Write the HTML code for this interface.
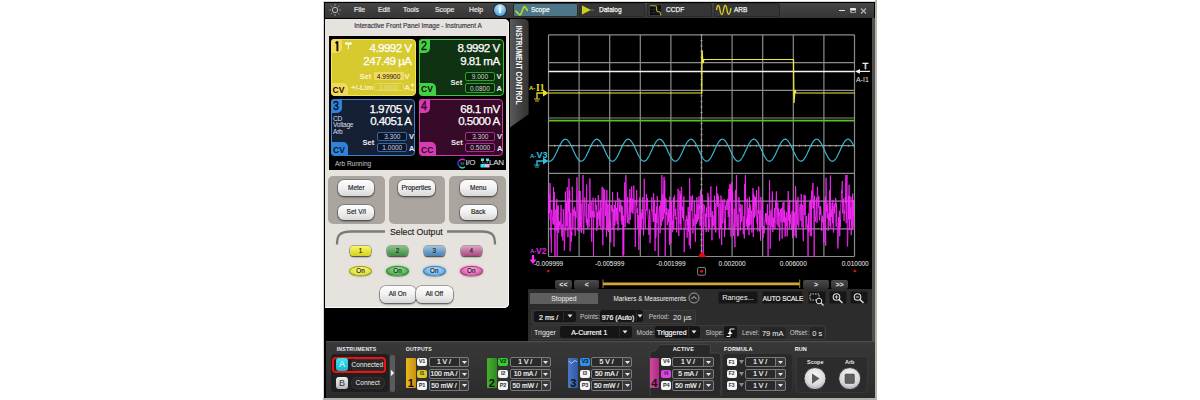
<!DOCTYPE html><html><head><meta charset="utf-8"><style>
html,body{margin:0;padding:0}
body{width:1200px;height:400px;background:#fff;position:relative;overflow:hidden;font-family:"Liberation Sans",sans-serif}
div{box-sizing:border-box}
</style></head><body>
<div style="position:absolute;left:323px;top:1px;width:554px;height:399px;background:#d8d6d0"></div>
<div style="position:absolute;left:324px;top:2px;width:551px;height:396px;background:#000"></div>
<div style="position:absolute;left:875px;top:2px;width:2px;height:398px;background:#b8b4a8"></div>
<div style="position:absolute;left:323px;top:398px;width:554px;height:2px;background:#b4b0a8"></div>
<div style="position:absolute;left:325px;top:3px;width:549px;height:14.5px;background:linear-gradient(#464646,#353535)"></div>
<svg style="position:absolute;left:328px;top:3px" width="14" height="14" viewBox="0 0 14 14"><circle cx="7" cy="7" r="2.7" fill="none" stroke="#d0d0d0" stroke-width="0.85"/><g stroke="#a8a8a8" stroke-width="0.75"><line x1="7" y1="0.8" x2="7" y2="3"/><line x1="7" y1="11" x2="7" y2="13.2"/><line x1="0.8" y1="7" x2="3" y2="7"/><line x1="11" y1="7" x2="13.2" y2="7"/><line x1="2.6" y1="2.6" x2="4.1" y2="4.1"/><line x1="9.9" y1="9.9" x2="11.4" y2="11.4"/><line x1="2.6" y1="11.4" x2="4.1" y2="9.9"/><line x1="9.9" y1="4.1" x2="11.4" y2="2.6"/></g></svg>
<div style="position:absolute;left:354px;top:6.1px;text-align:left;white-space:nowrap;line-height:1;font-size:7.6px;color:#ececec;-webkit-text-stroke:0.2px #ececec;transform:scaleX(0.9);transform-origin:0 0">File</div>
<div style="position:absolute;left:377.5px;top:6.1px;text-align:left;white-space:nowrap;line-height:1;font-size:7.6px;color:#ececec;-webkit-text-stroke:0.2px #ececec;transform:scaleX(0.9);transform-origin:0 0">Edit</div>
<div style="position:absolute;left:403px;top:6.1px;text-align:left;white-space:nowrap;line-height:1;font-size:7.6px;color:#ececec;-webkit-text-stroke:0.2px #ececec;transform:scaleX(0.9);transform-origin:0 0">Tools</div>
<div style="position:absolute;left:435px;top:6.1px;text-align:left;white-space:nowrap;line-height:1;font-size:7.6px;color:#ececec;-webkit-text-stroke:0.2px #ececec;transform:scaleX(0.9);transform-origin:0 0">Scope</div>
<div style="position:absolute;left:469px;top:6.1px;text-align:left;white-space:nowrap;line-height:1;font-size:7.6px;color:#ececec;-webkit-text-stroke:0.2px #ececec;transform:scaleX(0.9);transform-origin:0 0">Help</div>
<div style="position:absolute;left:493.5px;top:3.8px;width:12.6px;height:12.6px;border-radius:50%;background:radial-gradient(circle at 50% 30%,#d8ecf8,#70b8e8 55%,#3088c8);box-shadow:0 0 0 1px #1c2a38"></div>
<div style="position:absolute;left:499px;top:7.6px;width:1.8px;height:5.4px;background:#f8f8f8"></div>
<div style="position:absolute;left:499px;top:5.6px;width:1.8px;height:1.4px;background:#f8f8f8"></div>
<div style="position:absolute;left:513px;top:3px;width:64.5px;height:14px;background:#4d7688;border-radius:2px;border:1px solid #2a2a2a"></div>
<svg style="position:absolute;left:515px;top:4px" width="13" height="12"><path d="M1 7 L4 10.5 Q5 11.5 6 10 L8.5 3.5 Q9.5 2 10.5 3.5 L12.5 6.5" fill="none" stroke="#b8e020" stroke-width="1.6" stroke-linecap="round"/></svg>
<div style="position:absolute;left:531px;top:6.0px;text-align:left;white-space:nowrap;line-height:1;font-size:7.6px;color:#f4f4f4;-webkit-text-stroke:0.25px #f4f4f4;transform:scaleX(0.86);transform-origin:0 0">Scope</div>
<div style="position:absolute;left:579px;top:3px;width:66px;height:14px;background:#363636;border-radius:2px;border:1px solid #2a2a2a"></div>
<svg style="position:absolute;left:581px;top:5px" width="14" height="10"><path d="M1 0.5 L10 5 L1 9.5 Z" fill="#c8d020"/><line x1="10" y1="5" x2="13" y2="5" stroke="#888" stroke-width="0.8"/></svg>
<div style="position:absolute;left:599px;top:6.0px;text-align:left;white-space:nowrap;line-height:1;font-size:7.6px;color:#f4f4f4;-webkit-text-stroke:0.25px #f4f4f4;transform:scaleX(0.86);transform-origin:0 0">Datalog</div>
<div style="position:absolute;left:647px;top:3px;width:65px;height:14px;background:#363636;border-radius:2px;border:1px solid #2a2a2a"></div>
<svg style="position:absolute;left:649px;top:4px" width="14" height="12"><rect x="1" y="1.5" width="11" height="9.5" fill="#0c0c0c"/><path d="M5 1.5 V11 M8.5 1.5 V11 M1 5.5 H12 M1 8.5 H12" stroke="#333" stroke-width="0.5"/><path d="M1 1.8 L6 1.8 Q7.5 1.8 7.5 3.5 L7.5 6 Q7.5 7.5 9 7.5 Q11.5 7.5 11.5 10 L12 11.5" fill="none" stroke="#b0a838" stroke-width="1.1"/></svg>
<div style="position:absolute;left:666px;top:6.0px;text-align:left;white-space:nowrap;line-height:1;font-size:7.6px;color:#f4f4f4;-webkit-text-stroke:0.25px #f4f4f4;transform:scaleX(0.86);transform-origin:0 0">CCDF</div>
<div style="position:absolute;left:714px;top:3px;width:66px;height:14px;background:#363636;border-radius:2px;border:1px solid #2a2a2a"></div>
<svg style="position:absolute;left:716px;top:4px" width="16" height="12"><path d="M0.5 6 C1.5 0 3 0 4 6 S6.5 12 7.5 6 S10 0 11 6 S13.5 12 15 4" fill="none" stroke="#e0d020" stroke-width="1.3"/></svg>
<div style="position:absolute;left:734px;top:6.0px;text-align:left;white-space:nowrap;line-height:1;font-size:7.6px;color:#f4f4f4;-webkit-text-stroke:0.25px #f4f4f4;transform:scaleX(0.86);transform-origin:0 0">ARB</div>
<div style="position:absolute;left:838.8px;top:9.6px;width:6px;height:1.5px;background:#e0e0e0"></div>
<div style="position:absolute;left:850px;top:8px;width:6px;height:5px;background:#9a9a9a;border-top:2px solid #e8e8e8;border-radius:1px"></div>
<div style="position:absolute;left:851.5px;top:10.5px;width:3px;height:1.3px;background:#333"></div>
<svg style="position:absolute;left:860px;top:7.5px" width="7" height="6"><path d="M1 0.5 L6 5.5 M6 0.5 L1 5.5" stroke="#b8b8b8" stroke-width="1.1"/></svg>
<div style="position:absolute;left:875px;top:0px;width:2px;height:400px;background:#b8b4a8"></div>
<div style="position:absolute;left:325px;top:19.2px;width:184px;height:289.2px;background:#e6e2dd;border-radius:0 5px 5px 0;box-shadow:inset 0 -1px 0 #fafafa,inset -1px 0 0 #f4f2ee"></div>
<div style="position:absolute;left:325px;top:22.8px;width:186px;text-align:center;white-space:nowrap;line-height:1;font-size:6.5px;color:#3a3040;-webkit-text-stroke:0.15px #3a3040">Interactive Front Panel Image - Instrument A</div>
<div style="position:absolute;left:329px;top:36.4px;width:177px;height:133.2px;background:#000"></div>
<div style="position:absolute;left:330.5px;top:38.5px;width:85.80000000000001px;height:57.5px;background:#d6ca2e;border:1.2px solid #f2e650;border-radius:4px"></div>
<div style="position:absolute;left:330.5px;top:38.5px;width:11.5px;height:14px;background:#f5da5c;border-radius:3px 0 5px 0"></div>
<svg style="position:absolute;left:330.5px;top:38.5px" width="12" height="14"><path d="M4.6 4.2 L6.4 2.6 L6.4 12.2" stroke="#111" stroke-width="1.9" fill="none" stroke-linejoin="bevel"/></svg>
<div style="position:absolute;left:351.5px;top:42.3px;width:60px;text-align:right;white-space:nowrap;line-height:1;font-size:11.6px;color:#fff;letter-spacing:-0.55px;-webkit-text-stroke:0.25px #fff">4.9992 V</div>
<div style="position:absolute;left:351.5px;top:55.0px;width:60px;text-align:right;white-space:nowrap;line-height:1;font-size:11.6px;color:#fff;letter-spacing:-0.55px;-webkit-text-stroke:0.25px #fff">247.49 µA</div>
<svg style="position:absolute;left:344px;top:40px" width="9" height="10"><ellipse cx="2.6" cy="3.5" rx="1.6" ry="1.2" fill="#fff"/><ellipse cx="6.2" cy="3.5" rx="1.6" ry="1.2" fill="#fff"/><path d="M4.4 2.5 L4.4 9" stroke="#f8f8e0" stroke-width="1.1"/></svg>
<div style="position:absolute;left:359.5px;top:72.8px;text-align:left;white-space:nowrap;line-height:1;font-size:7.5px;font-weight:bold;color:#faf4c8">Set</div>
<div style="position:absolute;left:373.6px;top:72px;width:30px;height:8.4px;background:#f2d85e"></div>
<div style="position:absolute;left:373.6px;top:73.8px;width:30px;text-align:center;white-space:nowrap;line-height:1;font-size:6.5px;color:#111">4.99900</div>
<div style="position:absolute;left:404.5px;top:72.8px;text-align:left;white-space:nowrap;line-height:1;font-size:7.5px;font-weight:bold;color:#faf4c8">V</div>
<div style="position:absolute;left:351px;top:83.6px;text-align:left;white-space:nowrap;line-height:1;font-size:7.5px;font-weight:bold;color:#faf0c0">+/-Lim</div>
<div style="position:absolute;left:373.6px;top:82.8px;width:30px;height:8.7px;border:1px solid #e6d868;border-radius:1.5px"></div>
<div style="position:absolute;left:373.6px;top:84.6px;width:30px;text-align:center;white-space:nowrap;line-height:1;font-size:6.5px;color:#e8e098">3.0600</div>
<div style="position:absolute;left:404.5px;top:83.6px;text-align:left;white-space:nowrap;line-height:1;font-size:7.5px;font-weight:bold;color:#faf4c8">A</div>
<svg style="position:absolute;left:410px;top:83px" width="5" height="8"><path d="M2.5 0.5 L2.5 4 M0.5 2 L4.5 2 M0.5 7 L4.5 7" stroke="#faf4c8" stroke-width="1" fill="none"/></svg>
<div style="position:absolute;left:330.5px;top:82.8px;width:17.2px;height:13.2px;background:#f3d85a;border-radius:0 5px 0 4px"></div>
<div style="position:absolute;left:332.5px;top:85.6px;text-align:left;white-space:nowrap;line-height:1;font-size:8.5px;font-weight:bold;color:#111">CV</div>
<div style="position:absolute;left:418.8px;top:38.5px;width:84.80000000000001px;height:57.099999999999994px;background:#0f3312;border:1.2px solid #3cc83c;border-radius:4px"></div>
<div style="position:absolute;left:418.8px;top:38.5px;width:11.5px;height:14px;background:#44d044;border-radius:3px 0 5px 0"></div>
<div style="position:absolute;left:421.40000000000003px;top:40.0px;text-align:left;white-space:nowrap;line-height:1;font-size:12.5px;color:#111;-webkit-text-stroke:0.4px #111;transform:scaleX(0.85);transform-origin:0 0">2</div>
<div style="position:absolute;left:439.6px;top:42.3px;width:60px;text-align:right;white-space:nowrap;line-height:1;font-size:11.6px;color:#fff;letter-spacing:-0.55px;-webkit-text-stroke:0.25px #fff">8.9992 V</div>
<div style="position:absolute;left:439.6px;top:55.0px;width:60px;text-align:right;white-space:nowrap;line-height:1;font-size:11.6px;color:#fff;letter-spacing:-0.55px;-webkit-text-stroke:0.25px #fff">9.81 mA</div>
<div style="position:absolute;left:450.5px;top:78.5px;text-align:left;white-space:nowrap;line-height:1;font-size:7.5px;font-weight:bold;color:#e8f0e8">Set</div>
<div style="position:absolute;left:464.9px;top:71.6px;width:30px;height:9.6px;border:1.2px solid #2fa02f;background:#0a280c;border-radius:2px"></div>
<div style="position:absolute;left:464.9px;top:74px;width:30px;text-align:center;white-space:nowrap;line-height:1;font-size:6.5px;color:#c8d8c8">9.000</div>
<div style="position:absolute;left:464.9px;top:83.3px;width:30px;height:9.9px;border:1.2px solid #2fa02f;background:#0a280c;border-radius:2px"></div>
<div style="position:absolute;left:464.9px;top:85.8px;width:30px;text-align:center;white-space:nowrap;line-height:1;font-size:6.5px;color:#c8d8c8">0.0800</div>
<div style="position:absolute;left:496.5px;top:73.2px;text-align:left;white-space:nowrap;line-height:1;font-size:7.5px;font-weight:bold;color:#e8f0e8">V</div>
<div style="position:absolute;left:496.5px;top:85px;text-align:left;white-space:nowrap;line-height:1;font-size:7.5px;font-weight:bold;color:#e8f0e8">A</div>
<div style="position:absolute;left:418.8px;top:82.8px;width:17.6px;height:12.8px;background:#44d044;border-radius:0 5px 0 4px"></div>
<div style="position:absolute;left:421px;top:85.4px;text-align:left;white-space:nowrap;line-height:1;font-size:8.5px;font-weight:bold;color:#111">CV</div>
<div style="position:absolute;left:330.8px;top:98.8px;width:84.59999999999997px;height:57.000000000000014px;background:#152034;border:1.2px solid #3a82cc;border-radius:4px"></div>
<div style="position:absolute;left:330.8px;top:98.8px;width:11.5px;height:14px;background:#2e84d8;border-radius:3px 0 5px 0"></div>
<div style="position:absolute;left:333.40000000000003px;top:100.3px;text-align:left;white-space:nowrap;line-height:1;font-size:12.5px;color:#0a1020;-webkit-text-stroke:0.4px #0a1020;transform:scaleX(0.85);transform-origin:0 0">3</div>
<div style="position:absolute;left:351.5px;top:102.6px;width:60px;text-align:right;white-space:nowrap;line-height:1;font-size:11.6px;color:#fff;letter-spacing:-0.55px;-webkit-text-stroke:0.25px #fff">1.9705 V</div>
<div style="position:absolute;left:351.5px;top:115.3px;width:60px;text-align:right;white-space:nowrap;line-height:1;font-size:11.6px;color:#fff;letter-spacing:-0.55px;-webkit-text-stroke:0.25px #fff">0.4051 A</div>
<div style="position:absolute;left:333px;top:115.6px;text-align:left;white-space:nowrap;line-height:1;font-size:6.6px;color:#d8dde8;letter-spacing:-0.25px">CD</div>
<div style="position:absolute;left:333px;top:122.2px;text-align:left;white-space:nowrap;line-height:1;font-size:6.6px;color:#d8dde8;letter-spacing:-0.25px">Voltage</div>
<div style="position:absolute;left:333px;top:128.5px;text-align:left;white-space:nowrap;line-height:1;font-size:6.6px;color:#d8dde8;letter-spacing:-0.25px">Arb</div>
<div style="position:absolute;left:362.5px;top:139px;text-align:left;white-space:nowrap;line-height:1;font-size:7.5px;font-weight:bold;color:#e8eef8">Set</div>
<div style="position:absolute;left:377.3px;top:132px;width:30px;height:8.6px;border:1.2px solid #3468a8;background:#0c1628;border-radius:2px"></div>
<div style="position:absolute;left:377.3px;top:134px;width:30px;text-align:center;white-space:nowrap;line-height:1;font-size:6.5px;color:#c8d0e0">3.300</div>
<div style="position:absolute;left:377.3px;top:143px;width:30px;height:9px;border:1.2px solid #3468a8;background:#0c1628;border-radius:2px"></div>
<div style="position:absolute;left:377.3px;top:145.2px;width:30px;text-align:center;white-space:nowrap;line-height:1;font-size:6.5px;color:#c8d0e0">1.0000</div>
<div style="position:absolute;left:409px;top:132.8px;text-align:left;white-space:nowrap;line-height:1;font-size:7.5px;font-weight:bold;color:#e8eef8">V</div>
<div style="position:absolute;left:409px;top:144.5px;text-align:left;white-space:nowrap;line-height:1;font-size:7.5px;font-weight:bold;color:#e8eef8">A</div>
<div style="position:absolute;left:330.8px;top:142.4px;width:17.6px;height:13.4px;background:#2e84d8;border-radius:0 5px 0 4px"></div>
<div style="position:absolute;left:333px;top:145.8px;text-align:left;white-space:nowrap;line-height:1;font-size:8.5px;font-weight:bold;color:#0a1830">CV</div>
<div style="position:absolute;left:418.8px;top:98.8px;width:84.59999999999997px;height:57.000000000000014px;background:#360a28;border:1.2px solid #d03cb0;border-radius:4px"></div>
<div style="position:absolute;left:418.8px;top:98.8px;width:11.5px;height:14px;background:#d83cb4;border-radius:3px 0 5px 0"></div>
<div style="position:absolute;left:421.40000000000003px;top:100.3px;text-align:left;white-space:nowrap;line-height:1;font-size:12.5px;color:#2a0a26;-webkit-text-stroke:0.4px #2a0a26;transform:scaleX(0.85);transform-origin:0 0">4</div>
<div style="position:absolute;left:439.6px;top:102.6px;width:60px;text-align:right;white-space:nowrap;line-height:1;font-size:11.6px;color:#fff;letter-spacing:-0.55px;-webkit-text-stroke:0.25px #fff">68.1 mV</div>
<div style="position:absolute;left:439.6px;top:115.3px;width:60px;text-align:right;white-space:nowrap;line-height:1;font-size:11.6px;color:#fff;letter-spacing:-0.55px;-webkit-text-stroke:0.25px #fff">0.5000 A</div>
<div style="position:absolute;left:451px;top:139px;text-align:left;white-space:nowrap;line-height:1;font-size:7.5px;font-weight:bold;color:#f0e8f0">Set</div>
<div style="position:absolute;left:465.3px;top:132px;width:30px;height:8.6px;border:1.2px solid #a82c8c;background:#2a0820;border-radius:2px"></div>
<div style="position:absolute;left:465.3px;top:134px;width:30px;text-align:center;white-space:nowrap;line-height:1;font-size:6.5px;color:#d8c8d8">3.300</div>
<div style="position:absolute;left:465.3px;top:143px;width:30px;height:9px;border:1.2px solid #a82c8c;background:#2a0820;border-radius:2px"></div>
<div style="position:absolute;left:465.3px;top:145.2px;width:30px;text-align:center;white-space:nowrap;line-height:1;font-size:6.5px;color:#d8c8d8">0.5000</div>
<div style="position:absolute;left:497px;top:132.8px;text-align:left;white-space:nowrap;line-height:1;font-size:7.5px;font-weight:bold;color:#f0e8f0">V</div>
<div style="position:absolute;left:497px;top:144.5px;text-align:left;white-space:nowrap;line-height:1;font-size:7.5px;font-weight:bold;color:#f0e8f0">A</div>
<div style="position:absolute;left:418.8px;top:142.4px;width:17.6px;height:13.4px;background:#d83cb4;border-radius:0 5px 0 4px"></div>
<div style="position:absolute;left:421px;top:145.8px;text-align:left;white-space:nowrap;line-height:1;font-size:8.5px;font-weight:bold;color:#2a0a26">CC</div>
<div style="position:absolute;left:335px;top:160.8px;text-align:left;white-space:nowrap;line-height:1;font-size:6.5px;color:#c8c8c8">Arb Running</div>
<svg style="position:absolute;left:457px;top:158px" width="10" height="11"><path d="M8 2.2 A4 4 0 0 0 2 3" stroke="#e020e0" stroke-width="1.4" fill="none"/><path d="M2 3 A4 4 0 0 0 2.5 8.5" stroke="#2040ff" stroke-width="1.4" fill="none"/><path d="M2.5 8.5 A4 4 0 0 0 8 8.8" stroke="#20e0b0" stroke-width="1.4" fill="none"/><text x="3.2" y="7.3" font-size="3.6" font-family="Liberation Sans" fill="#90a080">88</text></svg>
<div style="position:absolute;left:465.5px;top:159.3px;text-align:left;white-space:nowrap;line-height:1;font-size:8px;color:#e8e8e8;letter-spacing:-0.4px">I/O</div>
<svg style="position:absolute;left:480px;top:158px" width="10" height="10"><rect x="1" y="0.5" width="3" height="2.5" fill="#40e8f0"/><rect x="6" y="0.5" width="3" height="2.5" fill="#40e8f0"/><path d="M2.5 3 L2.5 5 L7.5 5 L7.5 3" stroke="#9090a0" stroke-width="0.6" fill="none"/><rect x="0.5" y="6" width="4.5" height="3.5" fill="#40e0f0"/><rect x="5" y="6" width="4.5" height="3.5" fill="#d8b8e0"/></svg>
<div style="position:absolute;left:489px;top:159.3px;text-align:left;white-space:nowrap;line-height:1;font-size:8px;color:#e8e8e8;letter-spacing:-0.3px">LAN</div>
<div style="position:absolute;left:327.9px;top:175.8px;width:56.900000000000034px;height:48.2px;background:#aaa69f;border-radius:5px"></div>
<div style="position:absolute;left:389.2px;top:175.8px;width:55.80000000000001px;height:48.2px;background:#aaa69f;border-radius:5px"></div>
<div style="position:absolute;left:448.5px;top:175.8px;width:57.69999999999999px;height:48.2px;background:#aaa69f;border-radius:5px"></div>
<div style="position:absolute;left:338.4px;top:180px;width:35.900000000000034px;height:16px;background:linear-gradient(#fdfdfd,#f0f0f0 50%,#d8d8d8);border-radius:6px;box-shadow:0 0 0 0.8px rgba(70,70,70,.55),0 1.2px 1.8px rgba(0,0,0,.55)"></div>
<div style="position:absolute;left:338.4px;top:184.75px;width:35.900000000000034px;text-align:center;white-space:nowrap;line-height:1;font-size:6.5px;color:#1a1a1a;-webkit-text-stroke:0.15px #1a1a1a">Meter</div>
<div style="position:absolute;left:338.4px;top:204.7px;width:35.900000000000034px;height:15.700000000000017px;background:linear-gradient(#fdfdfd,#f0f0f0 50%,#d8d8d8);border-radius:6px;box-shadow:0 0 0 0.8px rgba(70,70,70,.55),0 1.2px 1.8px rgba(0,0,0,.55)"></div>
<div style="position:absolute;left:338.4px;top:209.3px;width:35.900000000000034px;text-align:center;white-space:nowrap;line-height:1;font-size:6.5px;color:#1a1a1a;-webkit-text-stroke:0.15px #1a1a1a">Set V/I</div>
<div style="position:absolute;left:398px;top:180px;width:36.5px;height:16px;background:linear-gradient(#fdfdfd,#f0f0f0 50%,#d8d8d8);border-radius:6px;box-shadow:0 0 0 0.8px rgba(70,70,70,.55),0 1.2px 1.8px rgba(0,0,0,.55)"></div>
<div style="position:absolute;left:398px;top:184.75px;width:36.5px;text-align:center;white-space:nowrap;line-height:1;font-size:6.5px;color:#1a1a1a;-webkit-text-stroke:0.15px #1a1a1a">Properties</div>
<div style="position:absolute;left:459.9px;top:180px;width:36.700000000000045px;height:16px;background:linear-gradient(#fdfdfd,#f0f0f0 50%,#d8d8d8);border-radius:6px;box-shadow:0 0 0 0.8px rgba(70,70,70,.55),0 1.2px 1.8px rgba(0,0,0,.55)"></div>
<div style="position:absolute;left:459.9px;top:184.75px;width:36.700000000000045px;text-align:center;white-space:nowrap;line-height:1;font-size:6.5px;color:#1a1a1a;-webkit-text-stroke:0.15px #1a1a1a">Menu</div>
<div style="position:absolute;left:459.9px;top:204.7px;width:36.700000000000045px;height:15.700000000000017px;background:linear-gradient(#fdfdfd,#f0f0f0 50%,#d8d8d8);border-radius:6px;box-shadow:0 0 0 0.8px rgba(70,70,70,.55),0 1.2px 1.8px rgba(0,0,0,.55)"></div>
<div style="position:absolute;left:459.9px;top:209.3px;width:36.700000000000045px;text-align:center;white-space:nowrap;line-height:1;font-size:6.5px;color:#1a1a1a;-webkit-text-stroke:0.15px #1a1a1a">Back</div>
<svg style="position:absolute;left:330px;top:225px" width="175" height="25"><path d="M7 19.5 C7 11 9 6.5 21 6.5 L55 6.5" fill="none" stroke="#7e7a74" stroke-width="2.3"/><path d="M117 6.5 L152 6.5 C163 6.5 165 11 165 19.5" fill="none" stroke="#7e7a74" stroke-width="2.3"/></svg>
<div style="position:absolute;left:390px;top:227.8px;text-align:left;white-space:nowrap;line-height:1;font-size:8.7px;color:#1e1e1e;-webkit-text-stroke:0.15px #1e1e1e">Select Output</div>
<div style="position:absolute;left:350px;top:246px;width:21px;height:9.75px;background:linear-gradient(#f8f860,#d8d020);border-radius:3.5px;box-shadow:0 0 0 0.7px rgba(40,40,40,.45),0 1.2px 1.2px rgba(0,0,0,.55)"></div>
<div style="position:absolute;left:350px;top:247.7px;width:21px;text-align:center;white-space:nowrap;line-height:1;font-size:6.3px;color:#222;-webkit-text-stroke:0.15px #222">1</div>
<div style="position:absolute;left:387px;top:246px;width:21px;height:9.75px;background:linear-gradient(#88c488,#3e8a44);border-radius:3.5px;box-shadow:0 0 0 0.7px rgba(40,40,40,.45),0 1.2px 1.2px rgba(0,0,0,.55)"></div>
<div style="position:absolute;left:387px;top:247.7px;width:21px;text-align:center;white-space:nowrap;line-height:1;font-size:6.3px;color:#222;-webkit-text-stroke:0.15px #222">2</div>
<div style="position:absolute;left:423.75px;top:246px;width:21px;height:9.75px;background:linear-gradient(#9cc4e4,#4a80b0);border-radius:3.5px;box-shadow:0 0 0 0.7px rgba(40,40,40,.45),0 1.2px 1.2px rgba(0,0,0,.55)"></div>
<div style="position:absolute;left:423.75px;top:247.7px;width:21px;text-align:center;white-space:nowrap;line-height:1;font-size:6.3px;color:#222;-webkit-text-stroke:0.15px #222">3</div>
<div style="position:absolute;left:460.75px;top:246px;width:21px;height:9.75px;background:linear-gradient(#e0a0c4,#a8487e);border-radius:3.5px;box-shadow:0 0 0 0.7px rgba(40,40,40,.45),0 1.2px 1.2px rgba(0,0,0,.55)"></div>
<div style="position:absolute;left:460.75px;top:247.7px;width:21px;text-align:center;white-space:nowrap;line-height:1;font-size:6.3px;color:#222;-webkit-text-stroke:0.15px #222">4</div>
<div style="position:absolute;left:349px;top:265.8px;width:23px;height:10.4px;background:radial-gradient(ellipse at 50% 30%,#fcfc90,#e0e030 75%);border-radius:50%;box-shadow:0 0 2px 0.5px rgba(240,240,60,.6),0 0.6px 0.8px rgba(0,0,0,.6);border:0.8px solid rgba(0,0,0,.3)"></div>
<div style="position:absolute;left:349px;top:267.9px;width:23px;text-align:center;white-space:nowrap;line-height:1;font-size:6.3px;color:#111;-webkit-text-stroke:0.15px #111">On</div>
<div style="position:absolute;left:386px;top:265.8px;width:23px;height:10.4px;background:radial-gradient(ellipse at 50% 30%,#a0e8a0,#48b048 75%);border-radius:50%;box-shadow:0 0 2px 0.5px rgba(60,200,60,.6),0 0.6px 0.8px rgba(0,0,0,.6);border:0.8px solid rgba(0,0,0,.3)"></div>
<div style="position:absolute;left:386px;top:267.9px;width:23px;text-align:center;white-space:nowrap;line-height:1;font-size:6.3px;color:#111;-webkit-text-stroke:0.15px #111">On</div>
<div style="position:absolute;left:422.75px;top:265.8px;width:23px;height:10.4px;background:radial-gradient(ellipse at 50% 30%,#c0e4ff,#60acec 75%);border-radius:50%;box-shadow:0 0 2px 0.5px rgba(80,170,240,.6),0 0.6px 0.8px rgba(0,0,0,.6);border:0.8px solid rgba(0,0,0,.3)"></div>
<div style="position:absolute;left:422.75px;top:267.9px;width:23px;text-align:center;white-space:nowrap;line-height:1;font-size:6.3px;color:#111;-webkit-text-stroke:0.15px #111">On</div>
<div style="position:absolute;left:459.75px;top:265.8px;width:23px;height:10.4px;background:radial-gradient(ellipse at 50% 30%,#ffb0e0,#e058b0 75%);border-radius:50%;box-shadow:0 0 2px 0.5px rgba(240,80,170,.6),0 0.6px 0.8px rgba(0,0,0,.6);border:0.8px solid rgba(0,0,0,.3)"></div>
<div style="position:absolute;left:459.75px;top:267.9px;width:23px;text-align:center;white-space:nowrap;line-height:1;font-size:6.3px;color:#111;-webkit-text-stroke:0.15px #111">On</div>
<div style="position:absolute;left:379.5px;top:286px;width:36.0px;height:16.5px;background:linear-gradient(#fdfdfd,#f0f0f0 50%,#d8d8d8);border-radius:6px;box-shadow:0 0 0 0.8px rgba(70,70,70,.55),0 1.2px 1.8px rgba(0,0,0,.55)"></div>
<div style="position:absolute;left:379.5px;top:291.0px;width:36.0px;text-align:center;white-space:nowrap;line-height:1;font-size:6.5px;color:#1a1a1a;-webkit-text-stroke:0.15px #1a1a1a">All On</div>
<div style="position:absolute;left:416px;top:286px;width:36.5px;height:16.5px;background:linear-gradient(#fdfdfd,#f0f0f0 50%,#d8d8d8);border-radius:6px;box-shadow:0 0 0 0.8px rgba(70,70,70,.55),0 1.2px 1.8px rgba(0,0,0,.55)"></div>
<div style="position:absolute;left:416px;top:291.0px;width:36.5px;text-align:center;white-space:nowrap;line-height:1;font-size:6.5px;color:#1a1a1a;-webkit-text-stroke:0.15px #1a1a1a">All Off</div>
<div style="position:absolute;left:509.5px;top:18.8px;width:19.1px;height:109px;background:linear-gradient(90deg,#5a5a5a,#3c3c3c 70%,#343434);border-radius:0 5px 0 0;clip-path:polygon(0 0,100% 0,100% 87.5%,0 100%)"></div>
<div style="position:absolute;left:514px;top:24px;width:8px;height:100px;"><div style="position:absolute;left:0;top:0;transform-origin:0 0;transform:translate(9px,1.5px) rotate(90deg) scaleX(0.82);white-space:nowrap;font-size:8.2px;font-weight:bold;color:#f8f8f8;line-height:9px">INSTRUMENT CONTROL</div></div>
<svg style="position:absolute;left:0;top:0" width="1200" height="400"><line x1="548.50" y1="34.9" x2="548.50" y2="256.5" stroke="#8c8c8c" stroke-width="1.2"/><line x1="579.10" y1="34.9" x2="579.10" y2="256.5" stroke="#8c8c8c" stroke-width="1.2"/><line x1="609.70" y1="34.9" x2="609.70" y2="256.5" stroke="#8c8c8c" stroke-width="1.2"/><line x1="640.30" y1="34.9" x2="640.30" y2="256.5" stroke="#8c8c8c" stroke-width="1.2"/><line x1="670.90" y1="34.9" x2="670.90" y2="256.5" stroke="#8c8c8c" stroke-width="1.2"/><line x1="701.50" y1="34.9" x2="701.50" y2="256.5" stroke="#8c8c8c" stroke-width="1.2"/><line x1="732.10" y1="34.9" x2="732.10" y2="256.5" stroke="#8c8c8c" stroke-width="1.2"/><line x1="762.70" y1="34.9" x2="762.70" y2="256.5" stroke="#8c8c8c" stroke-width="1.2"/><line x1="793.30" y1="34.9" x2="793.30" y2="256.5" stroke="#8c8c8c" stroke-width="1.2"/><line x1="823.90" y1="34.9" x2="823.90" y2="256.5" stroke="#8c8c8c" stroke-width="1.2"/><line x1="854.50" y1="34.9" x2="854.50" y2="256.5" stroke="#8c8c8c" stroke-width="1.2"/><line x1="548.5" y1="34.90" x2="854.5" y2="34.90" stroke="#8c8c8c" stroke-width="1.2"/><line x1="548.5" y1="62.60" x2="854.5" y2="62.60" stroke="#8c8c8c" stroke-width="1.2"/><line x1="548.5" y1="90.30" x2="854.5" y2="90.30" stroke="#8c8c8c" stroke-width="1.2"/><line x1="548.5" y1="118.00" x2="854.5" y2="118.00" stroke="#8c8c8c" stroke-width="1.2"/><line x1="548.5" y1="145.70" x2="854.5" y2="145.70" stroke="#8c8c8c" stroke-width="1.2"/><line x1="548.5" y1="173.40" x2="854.5" y2="173.40" stroke="#8c8c8c" stroke-width="1.2"/><line x1="548.5" y1="201.10" x2="854.5" y2="201.10" stroke="#8c8c8c" stroke-width="1.2"/><line x1="548.5" y1="228.80" x2="854.5" y2="228.80" stroke="#8c8c8c" stroke-width="1.2"/><line x1="548.5" y1="256.50" x2="854.5" y2="256.50" stroke="#8c8c8c" stroke-width="1.2"/><path d="M548.50 144.80h0.01v1.8 M554.62 144.80h0.01v1.8 M560.74 144.80h0.01v1.8 M566.86 144.80h0.01v1.8 M572.98 144.80h0.01v1.8 M579.10 144.80h0.01v1.8 M585.22 144.80h0.01v1.8 M591.34 144.80h0.01v1.8 M597.46 144.80h0.01v1.8 M603.58 144.80h0.01v1.8 M609.70 144.80h0.01v1.8 M615.82 144.80h0.01v1.8 M621.94 144.80h0.01v1.8 M628.06 144.80h0.01v1.8 M634.18 144.80h0.01v1.8 M640.30 144.80h0.01v1.8 M646.42 144.80h0.01v1.8 M652.54 144.80h0.01v1.8 M658.66 144.80h0.01v1.8 M664.78 144.80h0.01v1.8 M670.90 144.80h0.01v1.8 M677.02 144.80h0.01v1.8 M683.14 144.80h0.01v1.8 M689.26 144.80h0.01v1.8 M695.38 144.80h0.01v1.8 M701.50 144.80h0.01v1.8 M707.62 144.80h0.01v1.8 M713.74 144.80h0.01v1.8 M719.86 144.80h0.01v1.8 M725.98 144.80h0.01v1.8 M732.10 144.80h0.01v1.8 M738.22 144.80h0.01v1.8 M744.34 144.80h0.01v1.8 M750.46 144.80h0.01v1.8 M756.58 144.80h0.01v1.8 M762.70 144.80h0.01v1.8 M768.82 144.80h0.01v1.8 M774.94 144.80h0.01v1.8 M781.06 144.80h0.01v1.8 M787.18 144.80h0.01v1.8 M793.30 144.80h0.01v1.8 M799.42 144.80h0.01v1.8 M805.54 144.80h0.01v1.8 M811.66 144.80h0.01v1.8 M817.78 144.80h0.01v1.8 M823.90 144.80h0.01v1.8 M830.02 144.80h0.01v1.8 M836.14 144.80h0.01v1.8 M842.26 144.80h0.01v1.8 M848.38 144.80h0.01v1.8 M700.60 34.90h1.8 M700.60 40.44h1.8 M700.60 45.98h1.8 M700.60 51.52h1.8 M700.60 57.06h1.8 M700.60 62.60h1.8 M700.60 68.14h1.8 M700.60 73.68h1.8 M700.60 79.22h1.8 M700.60 84.76h1.8 M700.60 90.30h1.8 M700.60 95.84h1.8 M700.60 101.38h1.8 M700.60 106.92h1.8 M700.60 112.46h1.8 M700.60 118.00h1.8 M700.60 123.54h1.8 M700.60 129.08h1.8 M700.60 134.62h1.8 M700.60 140.16h1.8 M700.60 145.70h1.8 M700.60 151.24h1.8 M700.60 156.78h1.8 M700.60 162.32h1.8 M700.60 167.86h1.8 M700.60 173.40h1.8 M700.60 178.94h1.8 M700.60 184.48h1.8 M700.60 190.02h1.8 M700.60 195.56h1.8 M700.60 201.10h1.8 M700.60 206.64h1.8 M700.60 212.18h1.8 M700.60 217.72h1.8 M700.60 223.26h1.8 M700.60 228.80h1.8 M700.60 234.34h1.8 M700.60 239.88h1.8 M700.60 245.42h1.8 M700.60 250.96h1.8" stroke="#b0b0b0" stroke-width="1" fill="none"/><line x1="548.5" y1="71.4" x2="854.5" y2="71.4" stroke="#f2f2f2" stroke-width="1.5"/><line x1="548.5" y1="120.6" x2="854.5" y2="120.6" stroke="#58c020" stroke-width="1.6"/><path d="M548.5 93 L701.8 93 L702 50 L703 63 L704 59.5 L793.5 59.5 L794 103 L795 90 L796 93 L854.5 93" stroke="#f2ee34" stroke-width="1.2" fill="none"/><path d="M548.50 160.88 L549.00 161.09 L549.50 161.19 L550.00 161.18 L550.50 161.06 L551.00 160.83 L551.50 160.49 L552.00 160.06 L552.50 159.52 L553.00 158.89 L553.50 158.17 L554.00 157.37 L554.50 156.50 L555.00 155.57 L555.50 154.59 L556.00 153.56 L556.50 152.49 L557.00 151.41 L557.50 150.31 L558.00 149.21 L558.50 148.12 L559.00 147.05 L559.50 146.02 L560.00 145.02 L560.50 144.08 L561.00 143.20 L561.50 142.38 L562.00 141.65 L562.50 141.00 L563.00 140.44 L563.50 139.99 L564.00 139.63 L564.50 139.38 L565.00 139.24 L565.50 139.20 L566.00 139.28 L566.50 139.47 L567.00 139.76 L567.50 140.16 L568.00 140.66 L568.50 141.25 L569.00 141.93 L569.50 142.70 L570.00 143.54 L570.50 144.45 L571.00 145.41 L571.50 146.43 L572.00 147.48 L572.50 148.56 L573.00 149.65 L573.50 150.75 L574.00 151.84 L574.50 152.92 L575.00 153.97 L575.50 154.99 L576.00 155.95 L576.50 156.86 L577.00 157.70 L577.50 158.47 L578.00 159.15 L578.50 159.74 L579.00 160.24 L579.50 160.64 L580.00 160.93 L580.50 161.12 L581.00 161.20 L581.50 161.16 L582.00 161.02 L582.50 160.77 L583.00 160.41 L583.50 159.96 L584.00 159.40 L584.50 158.75 L585.00 158.02 L585.50 157.20 L586.00 156.32 L586.50 155.38 L587.00 154.38 L587.50 153.35 L588.00 152.28 L588.50 151.19 L589.00 150.09 L589.50 148.99 L590.00 147.91 L590.50 146.84 L591.00 145.81 L591.50 144.83 L592.00 143.90 L592.50 143.03 L593.00 142.23 L593.50 141.51 L594.00 140.88 L594.50 140.34 L595.00 139.91 L595.50 139.57 L596.00 139.34 L596.50 139.22 L597.00 139.21 L597.50 139.31 L598.00 139.52 L598.50 139.83 L599.00 140.25 L599.50 140.77 L600.00 141.38 L600.50 142.08 L601.00 142.86 L601.50 143.72 L602.00 144.64 L602.50 145.61 L603.00 146.63 L603.50 147.69 L604.00 148.77 L604.50 149.87 L605.00 150.97 L605.50 152.06 L606.00 153.14 L606.50 154.18 L607.00 155.18 L607.50 156.14 L608.00 157.03 L608.50 157.86 L609.00 158.61 L609.50 159.28 L610.00 159.85 L610.50 160.33 L611.00 160.71 L611.50 160.98 L612.00 161.14 L612.50 161.20 L613.00 161.14 L613.50 160.98 L614.00 160.71 L614.50 160.33 L615.00 159.85 L615.50 159.28 L616.00 158.61 L616.50 157.86 L617.00 157.03 L617.50 156.14 L618.00 155.18 L618.50 154.18 L619.00 153.14 L619.50 152.06 L620.00 150.97 L620.50 149.87 L621.00 148.77 L621.50 147.69 L622.00 146.63 L622.50 145.61 L623.00 144.64 L623.50 143.72 L624.00 142.86 L624.50 142.08 L625.00 141.38 L625.50 140.77 L626.00 140.25 L626.50 139.83 L627.00 139.52 L627.50 139.31 L628.00 139.21 L628.50 139.22 L629.00 139.34 L629.50 139.57 L630.00 139.91 L630.50 140.34 L631.00 140.88 L631.50 141.51 L632.00 142.23 L632.50 143.03 L633.00 143.90 L633.50 144.83 L634.00 145.81 L634.50 146.84 L635.00 147.91 L635.50 148.99 L636.00 150.09 L636.50 151.19 L637.00 152.28 L637.50 153.35 L638.00 154.38 L638.50 155.38 L639.00 156.32 L639.50 157.20 L640.00 158.02 L640.50 158.75 L641.00 159.40 L641.50 159.96 L642.00 160.41 L642.50 160.77 L643.00 161.02 L643.50 161.16 L644.00 161.20 L644.50 161.12 L645.00 160.93 L645.50 160.64 L646.00 160.24 L646.50 159.74 L647.00 159.15 L647.50 158.47 L648.00 157.70 L648.50 156.86 L649.00 155.95 L649.50 154.99 L650.00 153.97 L650.50 152.92 L651.00 151.84 L651.50 150.75 L652.00 149.65 L652.50 148.56 L653.00 147.48 L653.50 146.43 L654.00 145.41 L654.50 144.45 L655.00 143.54 L655.50 142.70 L656.00 141.93 L656.50 141.25 L657.00 140.66 L657.50 140.16 L658.00 139.76 L658.50 139.47 L659.00 139.28 L659.50 139.20 L660.00 139.24 L660.50 139.38 L661.00 139.63 L661.50 139.99 L662.00 140.44 L662.50 141.00 L663.00 141.65 L663.50 142.38 L664.00 143.20 L664.50 144.08 L665.00 145.02 L665.50 146.02 L666.00 147.05 L666.50 148.12 L667.00 149.21 L667.50 150.31 L668.00 151.41 L668.50 152.49 L669.00 153.56 L669.50 154.59 L670.00 155.57 L670.50 156.50 L671.00 157.37 L671.50 158.17 L672.00 158.89 L672.50 159.52 L673.00 160.06 L673.50 160.49 L674.00 160.83 L674.50 161.06 L675.00 161.18 L675.50 161.19 L676.00 161.09 L676.50 160.88 L677.00 160.57 L677.50 160.15 L678.00 159.63 L678.50 159.02 L679.00 158.32 L679.50 157.54 L680.00 156.68 L680.50 155.76 L681.00 154.79 L681.50 153.77 L682.00 152.71 L682.50 151.63 L683.00 150.53 L683.50 149.43 L684.00 148.34 L684.50 147.26 L685.00 146.22 L685.50 145.22 L686.00 144.26 L686.50 143.37 L687.00 142.54 L687.50 141.79 L688.00 141.12 L688.50 140.55 L689.00 140.07 L689.50 139.69 L690.00 139.42 L690.50 139.26 L691.00 139.20 L691.50 139.26 L692.00 139.42 L692.50 139.69 L693.00 140.07 L693.50 140.55 L694.00 141.12 L694.50 141.79 L695.00 142.54 L695.50 143.37 L696.00 144.26 L696.50 145.22 L697.00 146.22 L697.50 147.26 L698.00 148.34 L698.50 149.43 L699.00 150.53 L699.50 151.63 L700.00 152.71 L700.50 153.77 L701.00 154.79 L701.50 155.76 L702.00 156.68 L702.50 157.54 L703.00 158.32 L703.50 159.02 L704.00 159.63 L704.50 160.15 L705.00 160.57 L705.50 160.88 L706.00 161.09 L706.50 161.19 L707.00 161.18 L707.50 161.06 L708.00 160.83 L708.50 160.49 L709.00 160.06 L709.50 159.52 L710.00 158.89 L710.50 158.17 L711.00 157.37 L711.50 156.50 L712.00 155.57 L712.50 154.59 L713.00 153.56 L713.50 152.49 L714.00 151.41 L714.50 150.31 L715.00 149.21 L715.50 148.12 L716.00 147.05 L716.50 146.02 L717.00 145.02 L717.50 144.08 L718.00 143.20 L718.50 142.38 L719.00 141.65 L719.50 141.00 L720.00 140.44 L720.50 139.99 L721.00 139.63 L721.50 139.38 L722.00 139.24 L722.50 139.20 L723.00 139.28 L723.50 139.47 L724.00 139.76 L724.50 140.16 L725.00 140.66 L725.50 141.25 L726.00 141.93 L726.50 142.70 L727.00 143.54 L727.50 144.45 L728.00 145.41 L728.50 146.43 L729.00 147.48 L729.50 148.56 L730.00 149.65 L730.50 150.75 L731.00 151.84 L731.50 152.92 L732.00 153.97 L732.50 154.99 L733.00 155.95 L733.50 156.86 L734.00 157.70 L734.50 158.47 L735.00 159.15 L735.50 159.74 L736.00 160.24 L736.50 160.64 L737.00 160.93 L737.50 161.12 L738.00 161.20 L738.50 161.16 L739.00 161.02 L739.50 160.77 L740.00 160.41 L740.50 159.96 L741.00 159.40 L741.50 158.75 L742.00 158.02 L742.50 157.20 L743.00 156.32 L743.50 155.38 L744.00 154.38 L744.50 153.35 L745.00 152.28 L745.50 151.19 L746.00 150.09 L746.50 148.99 L747.00 147.91 L747.50 146.84 L748.00 145.81 L748.50 144.83 L749.00 143.90 L749.50 143.03 L750.00 142.23 L750.50 141.51 L751.00 140.88 L751.50 140.34 L752.00 139.91 L752.50 139.57 L753.00 139.34 L753.50 139.22 L754.00 139.21 L754.50 139.31 L755.00 139.52 L755.50 139.83 L756.00 140.25 L756.50 140.77 L757.00 141.38 L757.50 142.08 L758.00 142.86 L758.50 143.72 L759.00 144.64 L759.50 145.61 L760.00 146.63 L760.50 147.69 L761.00 148.77 L761.50 149.87 L762.00 150.97 L762.50 152.06 L763.00 153.14 L763.50 154.18 L764.00 155.18 L764.50 156.14 L765.00 157.03 L765.50 157.86 L766.00 158.61 L766.50 159.28 L767.00 159.85 L767.50 160.33 L768.00 160.71 L768.50 160.98 L769.00 161.14 L769.50 161.20 L770.00 161.14 L770.50 160.98 L771.00 160.71 L771.50 160.33 L772.00 159.85 L772.50 159.28 L773.00 158.61 L773.50 157.86 L774.00 157.03 L774.50 156.14 L775.00 155.18 L775.50 154.18 L776.00 153.14 L776.50 152.06 L777.00 150.97 L777.50 149.87 L778.00 148.77 L778.50 147.69 L779.00 146.63 L779.50 145.61 L780.00 144.64 L780.50 143.72 L781.00 142.86 L781.50 142.08 L782.00 141.38 L782.50 140.77 L783.00 140.25 L783.50 139.83 L784.00 139.52 L784.50 139.31 L785.00 139.21 L785.50 139.22 L786.00 139.34 L786.50 139.57 L787.00 139.91 L787.50 140.34 L788.00 140.88 L788.50 141.51 L789.00 142.23 L789.50 143.03 L790.00 143.90 L790.50 144.83 L791.00 145.81 L791.50 146.84 L792.00 147.91 L792.50 148.99 L793.00 150.09 L793.50 151.19 L794.00 152.28 L794.50 153.35 L795.00 154.38 L795.50 155.38 L796.00 156.32 L796.50 157.20 L797.00 158.02 L797.50 158.75 L798.00 159.40 L798.50 159.96 L799.00 160.41 L799.50 160.77 L800.00 161.02 L800.50 161.16 L801.00 161.20 L801.50 161.12 L802.00 160.93 L802.50 160.64 L803.00 160.24 L803.50 159.74 L804.00 159.15 L804.50 158.47 L805.00 157.70 L805.50 156.86 L806.00 155.95 L806.50 154.99 L807.00 153.97 L807.50 152.92 L808.00 151.84 L808.50 150.75 L809.00 149.65 L809.50 148.56 L810.00 147.48 L810.50 146.43 L811.00 145.41 L811.50 144.45 L812.00 143.54 L812.50 142.70 L813.00 141.93 L813.50 141.25 L814.00 140.66 L814.50 140.16 L815.00 139.76 L815.50 139.47 L816.00 139.28 L816.50 139.20 L817.00 139.24 L817.50 139.38 L818.00 139.63 L818.50 139.99 L819.00 140.44 L819.50 141.00 L820.00 141.65 L820.50 142.38 L821.00 143.20 L821.50 144.08 L822.00 145.02 L822.50 146.02 L823.00 147.05 L823.50 148.12 L824.00 149.21 L824.50 150.31 L825.00 151.41 L825.50 152.49 L826.00 153.56 L826.50 154.59 L827.00 155.57 L827.50 156.50 L828.00 157.37 L828.50 158.17 L829.00 158.89 L829.50 159.52 L830.00 160.06 L830.50 160.49 L831.00 160.83 L831.50 161.06 L832.00 161.18 L832.50 161.19 L833.00 161.09 L833.50 160.88 L834.00 160.57 L834.50 160.15 L835.00 159.63 L835.50 159.02 L836.00 158.32 L836.50 157.54 L837.00 156.68 L837.50 155.76 L838.00 154.79 L838.50 153.77 L839.00 152.71 L839.50 151.63 L840.00 150.53 L840.50 149.43 L841.00 148.34 L841.50 147.26 L842.00 146.22 L842.50 145.22 L843.00 144.26 L843.50 143.37 L844.00 142.54 L844.50 141.79 L845.00 141.12 L845.50 140.55 L846.00 140.07 L846.50 139.69 L847.00 139.42 L847.50 139.26 L848.00 139.20 L848.50 139.26 L849.00 139.42 L849.50 139.69 L850.00 140.07 L850.50 140.55 L851.00 141.12 L851.50 141.79 L852.00 142.54 L852.50 143.37 L853.00 144.26 L853.50 145.22 L854.00 146.22 L854.50 147.26" stroke="#38b8d0" stroke-width="1.2" fill="none"/><path d="M548.50 195.64 L548.86 219.66 L549.22 194.07 L549.58 213.02 L549.94 183.00 L550.30 194.61 L550.66 237.01 L551.02 239.05 L551.38 252.56 L551.74 209.67 L552.10 215.43 L552.46 217.71 L552.82 220.96 L553.18 224.39 L553.54 187.15 L553.90 224.53 L554.26 191.89 L554.62 214.03 L554.98 257.00 L555.34 213.27 L555.70 209.68 L556.06 230.89 L556.42 215.55 L556.78 198.91 L557.14 257.00 L557.50 206.42 L557.86 228.29 L558.22 204.97 L558.58 232.95 L558.94 223.36 L559.30 225.52 L559.66 221.02 L560.02 228.15 L560.38 226.95 L560.74 216.73 L561.10 205.02 L561.46 229.07 L561.82 236.67 L562.18 225.66 L562.54 224.48 L562.90 240.61 L563.26 209.09 L563.62 217.67 L563.98 228.56 L564.34 250.50 L564.70 240.64 L565.06 215.90 L565.42 191.45 L565.78 230.74 L566.14 224.64 L566.50 202.59 L566.86 225.89 L567.22 187.14 L567.58 200.41 L567.94 237.22 L568.30 198.94 L568.66 211.63 L569.02 178.45 L569.38 229.06 L569.74 190.61 L570.10 251.34 L570.46 223.26 L570.82 212.77 L571.18 241.92 L571.54 232.38 L571.90 235.37 L572.26 186.68 L572.62 203.31 L572.98 228.95 L573.34 208.97 L573.70 209.01 L574.06 215.77 L574.42 206.84 L574.78 210.51 L575.14 235.78 L575.50 211.32 L575.86 218.33 L576.22 217.09 L576.58 194.16 L576.94 177.33 L577.30 189.86 L577.66 216.71 L578.02 230.78 L578.38 222.59 L578.74 212.10 L579.10 190.68 L579.46 200.38 L579.82 232.29 L580.18 190.99 L580.54 227.19 L580.90 203.59 L581.26 203.59 L581.62 232.76 L581.98 224.35 L582.34 211.97 L582.70 199.26 L583.06 175.00 L583.42 224.45 L583.78 233.99 L584.14 217.79 L584.50 208.39 L584.86 197.33 L585.22 213.92 L585.58 216.26 L585.94 216.68 L586.30 222.74 L586.66 184.45 L587.02 225.29 L587.38 219.06 L587.74 229.10 L588.10 224.79 L588.46 203.90 L588.82 225.52 L589.18 227.27 L589.54 205.14 L589.90 178.37 L590.26 202.54 L590.62 217.67 L590.98 201.68 L591.34 201.56 L591.70 241.81 L592.06 210.85 L592.42 217.05 L592.78 210.87 L593.14 197.63 L593.50 256.09 L593.86 210.78 L594.22 214.94 L594.58 216.95 L594.94 217.60 L595.30 199.02 L595.66 198.05 L596.02 210.00 L596.38 204.83 L596.74 230.92 L597.10 215.15 L597.46 212.07 L597.82 227.68 L598.18 195.04 L598.54 197.40 L598.90 219.33 L599.26 210.44 L599.62 225.30 L599.98 226.01 L600.34 200.09 L600.70 227.60 L601.06 229.73 L601.42 208.25 L601.78 209.14 L602.14 186.73 L602.50 221.36 L602.86 245.34 L603.22 188.18 L603.58 207.89 L603.94 228.56 L604.30 203.07 L604.66 189.62 L605.02 200.45 L605.38 215.98 L605.74 208.91 L606.10 200.55 L606.46 236.74 L606.82 190.08 L607.18 211.51 L607.54 230.47 L607.90 204.07 L608.26 217.28 L608.62 232.05 L608.98 202.27 L609.34 200.02 L609.70 208.44 L610.06 227.61 L610.42 221.59 L610.78 242.26 L611.14 204.99 L611.50 209.55 L611.86 211.19 L612.22 211.81 L612.58 192.13 L612.94 229.76 L613.30 211.99 L613.66 208.84 L614.02 246.76 L614.38 204.90 L614.74 225.17 L615.10 225.45 L615.46 201.04 L615.82 215.93 L616.18 221.04 L616.54 207.92 L616.90 217.71 L617.26 224.11 L617.62 192.20 L617.98 230.45 L618.34 226.85 L618.70 226.50 L619.06 198.22 L619.42 210.95 L619.78 205.30 L620.14 212.38 L620.50 202.12 L620.86 199.92 L621.22 220.79 L621.58 205.45 L621.94 224.70 L622.30 206.50 L622.66 224.68 L623.02 257.00 L623.38 215.62 L623.74 254.97 L624.10 221.75 L624.46 190.79 L624.82 182.24 L625.18 227.08 L625.54 200.39 L625.90 175.00 L626.26 188.74 L626.62 213.10 L626.98 217.65 L627.34 223.05 L627.70 196.90 L628.06 208.25 L628.42 218.05 L628.78 223.29 L629.14 224.23 L629.50 211.02 L629.86 189.20 L630.22 220.02 L630.58 198.17 L630.94 211.41 L631.30 205.24 L631.66 186.43 L632.02 212.98 L632.38 198.74 L632.74 211.36 L633.10 213.79 L633.46 205.63 L633.82 185.42 L634.18 199.60 L634.54 203.59 L634.90 212.29 L635.26 246.97 L635.62 220.05 L635.98 199.94 L636.34 205.29 L636.70 189.91 L637.06 213.02 L637.42 208.35 L637.78 228.03 L638.14 214.94 L638.50 218.05 L638.86 249.86 L639.22 203.54 L639.58 197.57 L639.94 235.51 L640.30 213.98 L640.66 217.20 L641.02 213.60 L641.38 212.92 L641.74 229.19 L642.10 209.15 L642.46 218.81 L642.82 197.02 L643.18 208.47 L643.54 235.37 L643.90 212.88 L644.26 178.80 L644.62 199.44 L644.98 223.09 L645.34 228.30 L645.70 210.01 L646.06 210.65 L646.42 194.04 L646.78 210.61 L647.14 203.20 L647.50 198.08 L647.86 213.28 L648.22 218.11 L648.58 227.93 L648.94 234.94 L649.30 213.95 L649.66 209.19 L650.02 243.17 L650.38 228.52 L650.74 225.05 L651.10 212.12 L651.46 211.13 L651.82 197.39 L652.18 208.10 L652.54 209.50 L652.90 215.41 L653.26 221.99 L653.62 193.15 L653.98 221.82 L654.34 200.40 L654.70 206.27 L655.06 251.04 L655.42 213.45 L655.78 237.92 L656.14 234.79 L656.50 206.44 L656.86 223.24 L657.22 196.19 L657.58 202.43 L657.94 214.27 L658.30 255.88 L658.66 219.15 L659.02 215.31 L659.38 209.02 L659.74 205.70 L660.10 233.29 L660.46 225.64 L660.82 202.03 L661.18 226.24 L661.54 212.42 L661.90 175.00 L662.26 221.62 L662.62 194.46 L662.98 203.69 L663.34 219.30 L663.70 188.32 L664.06 176.89 L664.42 213.17 L664.78 180.23 L665.14 256.65 L665.50 243.78 L665.86 198.11 L666.22 207.22 L666.58 214.95 L666.94 208.11 L667.30 225.12 L667.66 220.27 L668.02 212.29 L668.38 222.15 L668.74 208.99 L669.10 219.58 L669.46 245.02 L669.82 196.58 L670.18 218.18 L670.54 201.91 L670.90 243.18 L671.26 201.30 L671.62 204.54 L671.98 224.66 L672.34 220.55 L672.70 232.18 L673.06 223.97 L673.42 197.48 L673.78 229.19 L674.14 205.70 L674.50 195.32 L674.86 208.68 L675.22 215.83 L675.58 208.86 L675.94 219.35 L676.30 217.12 L676.66 232.33 L677.02 224.79 L677.38 207.33 L677.74 204.93 L678.10 188.72 L678.46 210.55 L678.82 235.97 L679.18 209.56 L679.54 209.72 L679.90 190.85 L680.26 224.25 L680.62 194.27 L680.98 229.80 L681.34 186.83 L681.70 190.66 L682.06 210.48 L682.42 206.60 L682.78 218.04 L683.14 207.55 L683.50 220.40 L683.86 196.40 L684.22 252.30 L684.58 230.28 L684.94 228.32 L685.30 229.36 L685.66 220.35 L686.02 221.01 L686.38 215.63 L686.74 216.18 L687.10 237.74 L687.46 218.84 L687.82 225.18 L688.18 206.85 L688.54 231.50 L688.90 211.94 L689.26 245.28 L689.62 178.02 L689.98 202.97 L690.34 248.66 L690.70 225.19 L691.06 196.20 L691.42 210.88 L691.78 203.69 L692.14 204.76 L692.50 195.48 L692.86 233.34 L693.22 218.82 L693.58 221.32 L693.94 226.31 L694.30 200.77 L694.66 212.08 L695.02 232.45 L695.38 241.84 L695.74 214.24 L696.10 224.34 L696.46 224.01 L696.82 197.26 L697.18 216.10 L697.54 221.97 L697.90 204.03 L698.26 219.67 L698.62 210.73 L698.98 196.36 L699.34 209.07 L699.70 205.72 L700.06 225.99 L700.42 190.73 L700.78 218.86 L701.14 225.82 L701.50 223.26 L701.86 231.84 L702.22 194.83 L702.58 211.25 L702.94 203.30 L703.30 257.00 L703.66 217.05 L704.02 204.74 L704.38 205.72 L704.74 209.94 L705.10 226.99 L705.46 213.59 L705.82 224.01 L706.18 232.16 L706.54 207.47 L706.90 217.07 L707.26 204.06 L707.62 203.67 L707.98 192.84 L708.34 231.75 L708.70 196.82 L709.06 218.26 L709.42 224.95 L709.78 227.90 L710.14 206.43 L710.50 216.94 L710.86 186.33 L711.22 211.75 L711.58 215.39 L711.94 240.32 L712.30 211.00 L712.66 227.36 L713.02 215.56 L713.38 225.47 L713.74 223.05 L714.10 223.39 L714.46 195.63 L714.82 229.51 L715.18 203.18 L715.54 228.91 L715.90 232.44 L716.26 207.85 L716.62 186.17 L716.98 202.19 L717.34 206.86 L717.70 193.44 L718.06 203.28 L718.42 195.71 L718.78 226.81 L719.14 235.39 L719.50 238.44 L719.86 203.08 L720.22 209.65 L720.58 228.24 L720.94 195.46 L721.30 206.32 L721.66 245.05 L722.02 218.67 L722.38 199.72 L722.74 223.26 L723.10 215.89 L723.46 207.00 L723.82 203.21 L724.18 199.22 L724.54 237.11 L724.90 219.25 L725.26 230.01 L725.62 205.60 L725.98 210.08 L726.34 201.74 L726.70 204.50 L727.06 210.00 L727.42 206.62 L727.78 198.83 L728.14 216.90 L728.50 215.26 L728.86 188.99 L729.22 229.52 L729.58 188.94 L729.94 184.19 L730.30 200.89 L730.66 184.41 L731.02 236.82 L731.38 209.08 L731.74 182.18 L732.10 214.15 L732.46 192.26 L732.82 225.58 L733.18 225.50 L733.54 235.89 L733.90 221.41 L734.26 208.79 L734.62 238.00 L734.98 247.17 L735.34 193.32 L735.70 190.11 L736.06 226.86 L736.42 175.00 L736.78 200.78 L737.14 227.27 L737.50 236.23 L737.86 214.48 L738.22 235.49 L738.58 235.80 L738.94 197.12 L739.30 207.29 L739.66 211.65 L740.02 207.74 L740.38 230.47 L740.74 203.95 L741.10 215.75 L741.46 221.89 L741.82 208.02 L742.18 204.92 L742.54 215.58 L742.90 220.30 L743.26 234.26 L743.62 220.76 L743.98 216.20 L744.34 238.53 L744.70 183.83 L745.06 202.22 L745.42 175.00 L745.78 216.15 L746.14 226.67 L746.50 218.62 L746.86 223.97 L747.22 198.62 L747.58 229.86 L747.94 215.67 L748.30 226.58 L748.66 207.88 L749.02 235.14 L749.38 196.89 L749.74 225.44 L750.10 204.06 L750.46 206.80 L750.82 224.49 L751.18 220.40 L751.54 210.56 L751.90 232.59 L752.26 217.91 L752.62 213.70 L752.98 188.14 L753.34 236.88 L753.70 193.74 L754.06 206.56 L754.42 217.72 L754.78 196.30 L755.14 206.70 L755.50 197.34 L755.86 215.67 L756.22 205.14 L756.58 189.96 L756.94 223.44 L757.30 215.53 L757.66 231.32 L758.02 209.98 L758.38 214.03 L758.74 186.65 L759.10 200.57 L759.46 231.45 L759.82 215.96 L760.18 210.29 L760.54 240.76 L760.90 196.95 L761.26 206.12 L761.62 227.36 L761.98 224.29 L762.34 200.74 L762.70 201.36 L763.06 237.62 L763.42 228.67 L763.78 226.34 L764.14 233.39 L764.50 228.30 L764.86 219.78 L765.22 218.33 L765.58 213.19 L765.94 222.35 L766.30 213.27 L766.66 224.79 L767.02 216.72 L767.38 204.13 L767.74 227.37 L768.10 257.00 L768.46 224.68 L768.82 215.45 L769.18 225.37 L769.54 180.19 L769.90 222.33 L770.26 248.79 L770.62 211.58 L770.98 210.93 L771.34 209.79 L771.70 227.20 L772.06 198.91 L772.42 191.42 L772.78 231.99 L773.14 216.99 L773.50 227.53 L773.86 219.21 L774.22 222.68 L774.58 208.13 L774.94 229.24 L775.30 220.60 L775.66 200.90 L776.02 208.87 L776.38 191.41 L776.74 218.85 L777.10 224.65 L777.46 211.43 L777.82 202.42 L778.18 227.06 L778.54 208.51 L778.90 216.54 L779.26 212.32 L779.62 240.89 L779.98 229.49 L780.34 209.00 L780.70 213.39 L781.06 222.30 L781.42 217.70 L781.78 207.99 L782.14 238.76 L782.50 210.86 L782.86 202.78 L783.22 220.11 L783.58 222.11 L783.94 201.72 L784.30 222.31 L784.66 210.39 L785.02 236.64 L785.38 234.91 L785.74 217.25 L786.10 226.47 L786.46 212.07 L786.82 218.83 L787.18 236.42 L787.54 221.43 L787.90 200.28 L788.26 191.12 L788.62 220.57 L788.98 205.70 L789.34 229.51 L789.70 200.07 L790.06 223.80 L790.42 214.42 L790.78 220.62 L791.14 225.58 L791.50 230.10 L791.86 213.00 L792.22 210.92 L792.58 237.95 L792.94 219.88 L793.30 199.52 L793.66 205.33 L794.02 227.70 L794.38 216.04 L794.74 212.34 L795.10 236.21 L795.46 186.05 L795.82 189.28 L796.18 238.10 L796.54 204.87 L796.90 200.82 L797.26 222.25 L797.62 224.71 L797.98 196.85 L798.34 225.73 L798.70 227.45 L799.06 222.46 L799.42 212.77 L799.78 206.08 L800.14 204.07 L800.50 205.28 L800.86 220.86 L801.22 193.96 L801.58 207.75 L801.94 227.25 L802.30 211.37 L802.66 204.77 L803.02 235.94 L803.38 241.26 L803.74 207.71 L804.10 194.71 L804.46 215.13 L804.82 213.88 L805.18 195.46 L805.54 209.74 L805.90 228.22 L806.26 222.87 L806.62 216.19 L806.98 226.48 L807.34 224.70 L807.70 229.71 L808.06 257.00 L808.42 213.56 L808.78 231.85 L809.14 211.57 L809.50 202.83 L809.86 201.27 L810.22 235.88 L810.58 199.72 L810.94 207.55 L811.30 236.34 L811.66 190.45 L812.02 208.72 L812.38 197.84 L812.74 183.34 L813.10 182.94 L813.46 208.02 L813.82 199.55 L814.18 257.00 L814.54 195.72 L814.90 217.25 L815.26 216.99 L815.62 221.58 L815.98 213.48 L816.34 197.38 L816.70 209.45 L817.06 222.94 L817.42 186.78 L817.78 195.14 L818.14 196.78 L818.50 207.51 L818.86 196.30 L819.22 217.24 L819.58 220.36 L819.94 206.42 L820.30 214.95 L820.66 206.35 L821.02 210.64 L821.38 216.42 L821.74 231.04 L822.10 219.19 L822.46 215.73 L822.82 222.39 L823.18 218.50 L823.54 222.92 L823.90 242.80 L824.26 222.98 L824.62 199.89 L824.98 202.43 L825.34 196.53 L825.70 245.79 L826.06 177.75 L826.42 211.52 L826.78 204.79 L827.14 218.34 L827.50 218.01 L827.86 202.72 L828.22 230.76 L828.58 216.16 L828.94 213.43 L829.30 220.42 L829.66 190.40 L830.02 226.02 L830.38 175.51 L830.74 228.48 L831.10 209.33 L831.46 216.76 L831.82 212.24 L832.18 203.00 L832.54 223.29 L832.90 199.89 L833.26 230.07 L833.62 232.59 L833.98 206.58 L834.34 213.46 L834.70 203.68 L835.06 207.24 L835.42 205.52 L835.78 198.04 L836.14 226.86 L836.50 203.15 L836.86 221.54 L837.22 222.68 L837.58 243.67 L837.94 248.51 L838.30 241.95 L838.66 216.91 L839.02 229.09 L839.38 210.70 L839.74 236.31 L840.10 219.73 L840.46 226.89 L840.82 204.31 L841.18 203.05 L841.54 190.64 L841.90 193.07 L842.26 180.99 L842.62 213.41 L842.98 207.92 L843.34 198.68 L843.70 205.88 L844.06 221.19 L844.42 210.18 L844.78 213.63 L845.14 197.21 L845.50 202.84 L845.86 175.00 L846.22 223.22 L846.58 210.24 L846.94 175.00 L847.30 245.87 L847.66 246.55 L848.02 225.66 L848.38 195.68 L848.74 219.30 L849.10 184.83 L849.46 230.20 L849.82 196.77 L850.18 196.17 L850.54 219.29 L850.90 207.22 L851.26 235.18 L851.62 218.03 L851.98 197.05 L852.34 229.79 L852.70 193.66 L853.06 216.49 L853.42 200.00 L853.78 227.45 L854.14 217.17" stroke="#ff28ff" stroke-width="0.8" fill="none"/><text x="529" y="90" font-family="Liberation Sans" font-size="6" font-weight="bold" fill="#e8e020">A-</text><text x="536" y="90.5" font-family="Liberation Serif" font-size="9.5" font-weight="bold" fill="#e8e020">I1</text><path d="M537 99 L537 93 L544 93" stroke="#e8e020" stroke-width="1.3" fill="none"/><path d="M543 89.5 L548.5 93 L543 96.5Z" fill="#e8e020"/><path d="M534 99 L540 99 M535 101 L539 101" stroke="#e8e020" stroke-width="0.9"/><text x="530" y="158" font-family="Liberation Sans" font-size="6" font-weight="bold" fill="#30c0e0">A-</text><text x="536.5" y="158" font-family="Liberation Sans" font-size="9" font-weight="bold" fill="#30c0e0">V3</text><path d="M537 166 L537 161 L544 161" stroke="#30c0e0" stroke-width="1.3" fill="none"/><path d="M543 157.5 L548.5 161 L543 164.5Z" fill="#30c0e0"/><path d="M534 165 L540 165 M535 167 L539 167" stroke="#30c0e0" stroke-width="0.9"/><text x="530" y="253" font-family="Liberation Sans" font-size="6" font-weight="bold" fill="#c040d0">A-</text><text x="536" y="253.5" font-family="Liberation Sans" font-size="8.5" font-weight="bold" fill="#e020e0">V2</text><path d="M533 255 L533 261" stroke="#ff30ff" stroke-width="2.2"/><path d="M529.5 259.5 L533 264 L536.5 259.5Z" fill="#ff30ff"/><text x="862.6" y="68.8" font-family="Liberation Sans" font-size="9.5" fill="#f4f4f4" stroke="#f4f4f4" stroke-width="0.35">T</text><path d="M856 71.4 L870 71.4" stroke="#f0f0f0" stroke-width="1.2"/><path d="M855 71.4 L860 69 L860 73.8Z" fill="#f0f0f0"/><text x="856" y="81.6" font-family="Liberation Sans" font-size="7" fill="#e8e8e8">A-I1</text><text x="548.60" y="265.6" text-anchor="middle" font-family="Liberation Sans" font-size="6.5" fill="#f0f0f0">-0.009999</text><text x="609.70" y="265.6" text-anchor="middle" font-family="Liberation Sans" font-size="6.5" fill="#f0f0f0">-0.005999</text><text x="670.90" y="265.6" text-anchor="middle" font-family="Liberation Sans" font-size="6.5" fill="#f0f0f0">-0.001999</text><text x="732.10" y="265.6" text-anchor="middle" font-family="Liberation Sans" font-size="6.5" fill="#f0f0f0">0.002000</text><text x="793.30" y="265.6" text-anchor="middle" font-family="Liberation Sans" font-size="6.5" fill="#f0f0f0">0.006000</text><text x="855.20" y="265.6" text-anchor="middle" font-family="Liberation Sans" font-size="6.5" fill="#f0f0f0">0.010000</text><path d="M697.5 257 L702 251.5 L706.5 257Z" fill="#e01010"/><rect x="697.6" y="267.5" width="8" height="7.7" rx="1.5" fill="none" stroke="#909090" stroke-width="0.9"/><circle cx="701.6" cy="271.3" r="1.5" fill="#e01010"/><path d="M546.5 271.2 L548.3 269.6 L550.1 271.2 L548.3 272.6Z" fill="#e01010"/><path d="M853 271 L854.9 269.4 L856.8 271 L854.9 272.4Z" fill="#e01010"/><line x1="603" y1="283.9" x2="799.7" y2="283.9" stroke="#d0a838" stroke-width="2.6"/><line x1="603" y1="279.5" x2="603" y2="288" stroke="#c8a030" stroke-width="0.8"/><line x1="799.7" y1="279.5" x2="799.7" y2="288" stroke="#c8a030" stroke-width="0.8"/></svg>
<div style="position:absolute;left:555px;top:280.2px;width:16.799999999999955px;height:8.6px;background:linear-gradient(#4a4a4a,#2e2e2e);border-radius:2px"></div>
<div style="position:absolute;left:555px;top:281.2px;width:16.799999999999955px;text-align:center;white-space:nowrap;line-height:1;font-size:7px;color:#f0f0f0;font-weight:bold">&lt;&lt;</div>
<div style="position:absolute;left:574.2px;top:280.2px;width:25.0px;height:8.6px;background:linear-gradient(#4a4a4a,#2e2e2e);border-radius:2px"></div>
<div style="position:absolute;left:574.2px;top:281.2px;width:25.0px;text-align:center;white-space:nowrap;line-height:1;font-size:7px;color:#f0f0f0;font-weight:bold">&lt;</div>
<div style="position:absolute;left:803.4px;top:280.2px;width:25.200000000000045px;height:8.6px;background:linear-gradient(#4a4a4a,#2e2e2e);border-radius:2px"></div>
<div style="position:absolute;left:803.4px;top:281.2px;width:25.200000000000045px;text-align:center;white-space:nowrap;line-height:1;font-size:7px;color:#f0f0f0;font-weight:bold">&gt;</div>
<div style="position:absolute;left:830.9px;top:280.2px;width:17.200000000000045px;height:8.6px;background:linear-gradient(#4a4a4a,#2e2e2e);border-radius:2px"></div>
<div style="position:absolute;left:830.9px;top:281.2px;width:17.200000000000045px;text-align:center;white-space:nowrap;line-height:1;font-size:7px;color:#f0f0f0;font-weight:bold">&gt;&gt;</div>
<div style="position:absolute;left:528.2px;top:288.7px;width:344.2px;height:52px;background:#2c2c2c"></div>
<div style="position:absolute;left:530px;top:293px;width:68px;height:10.7px;background:#5e5e5e"></div>
<div style="position:absolute;left:530px;top:296px;width:68px;text-align:center;white-space:nowrap;line-height:1;font-size:6.8px;color:#f0f0f0">Stopped</div>
<div style="position:absolute;left:613.5px;top:295.9px;text-align:left;white-space:nowrap;line-height:1;font-size:6.35px;color:#f0f0f0">Markers &amp; Measurements</div>
<svg style="position:absolute;left:688px;top:292px" width="12" height="12"><circle cx="6" cy="6" r="5" fill="none" stroke="#9a9a9a" stroke-width="1"/><path d="M3.5 7 L6 4.5 L8.5 7" stroke="#cfcfcf" stroke-width="1" fill="none"/></svg>
<div style="position:absolute;left:718.3px;top:291.3px;width:39.40000000000009px;height:13.199999999999989px;background:#161616;border-radius:2px;border:1px solid #222"></div>
<div style="position:absolute;left:718.3px;top:294.05199999999996px;width:39.40000000000009px;text-align:center;white-space:nowrap;line-height:1;font-size:7.4px;color:#f0f0f0">Ranges...</div>
<div style="position:absolute;left:762.2px;top:291.3px;width:41.19999999999993px;height:13.199999999999989px;background:#161616;border-radius:2px;border:1px solid #222"></div>
<div style="position:absolute;left:758.8px;top:294.6px;width:48px;text-align:center;white-space:nowrap;line-height:1;font-size:7.6px;color:#f4f4f4;-webkit-text-stroke:0.2px #f4f4f4;transform:scaleX(0.84);transform-origin:50% 0">AUTO SCALE</div>
<div style="position:absolute;left:807.6px;top:291.3px;width:18.0px;height:13.199999999999989px;background:#161616;border-radius:2px;border:1px solid #222"></div>
<div style="position:absolute;left:829.2px;top:291.3px;width:17.799999999999955px;height:13.199999999999989px;background:#161616;border-radius:2px;border:1px solid #222"></div>
<div style="position:absolute;left:850.4px;top:291.3px;width:17.600000000000023px;height:13.199999999999989px;background:#161616;border-radius:2px;border:1px solid #222"></div>
<svg style="position:absolute;left:807px;top:291px" width="20" height="16"><rect x="3" y="3" width="9" height="6" fill="none" stroke="#ddd" stroke-width="0.9" stroke-dasharray="1.5 1"/><circle cx="12" cy="10" r="2.8" fill="#161616" stroke="#ddd" stroke-width="1"/><path d="M14 12 L16.5 14.5" stroke="#ddd" stroke-width="1.2"/></svg>
<svg style="position:absolute;left:829px;top:291px" width="18" height="14"><circle cx="7.5" cy="6" r="3.3" fill="none" stroke="#e0e0e0" stroke-width="1.1"/><path d="M10 8.5 L13.5 12" stroke="#e0e0e0" stroke-width="1.4"/><path d="M5.8 6 H9.2 M7.5 4.3 V7.7" stroke="#e0e0e0" stroke-width="0.9"/></svg>
<svg style="position:absolute;left:850px;top:291px" width="18" height="14"><circle cx="7.5" cy="6" r="3.3" fill="none" stroke="#e0e0e0" stroke-width="1.1"/><path d="M10 8.5 L13.5 12" stroke="#e0e0e0" stroke-width="1.4"/><path d="M5.8 6 H9.2" stroke="#e0e0e0" stroke-width="0.9"/></svg>
<div style="position:absolute;left:531.2px;top:309.5px;width:165px;height:14.8px;background:#303030;border:1px solid #3a3a3a;border-radius:2px"></div>
<div style="position:absolute;left:534.3px;top:311.2px;width:41.700000000000045px;height:10.5px;background:#151515;border-radius:2.5px"></div>
<div style="position:absolute;left:563px;top:312.2px;width:0.8px;height:8.5px;background:#2a2a2a"></div>
<div style="position:absolute;left:534.3px;top:313.65px;width:28.700000000000045px;text-align:center;white-space:nowrap;line-height:1;font-size:7px;color:#f4f4f4;-webkit-text-stroke:0.2px #f4f4f4">2 ms /</div>
<svg style="position:absolute;left:566.5px;top:314.45px" width="6" height="4"><path d="M0.5 0.5 L5.5 0.5 L3 3.5Z" fill="#e8e8e8"/></svg>
<div style="position:absolute;left:580px;top:314px;text-align:left;white-space:nowrap;line-height:1;font-size:6.5px;color:#c8c8c8">Points:</div>
<div style="position:absolute;left:600px;top:310.3px;width:43.39999999999998px;height:12.199999999999989px;background:#151515;border-radius:2.5px"></div>
<div style="position:absolute;left:636px;top:311.3px;width:0.8px;height:10.199999999999989px;background:#2a2a2a"></div>
<div style="position:absolute;left:600px;top:313.59999999999997px;width:36px;text-align:center;white-space:nowrap;line-height:1;font-size:7px;color:#f4f4f4;-webkit-text-stroke:0.2px #f4f4f4">976 (Auto)</div>
<svg style="position:absolute;left:636.7px;top:314.4px" width="6" height="4"><path d="M0.5 0.5 L5.5 0.5 L3 3.5Z" fill="#e8e8e8"/></svg>
<div style="position:absolute;left:648.7px;top:314px;text-align:left;white-space:nowrap;line-height:1;font-size:6.5px;color:#c8c8c8">Period:</div>
<div style="position:absolute;left:673px;top:313.6px;text-align:left;white-space:nowrap;line-height:1;font-size:7.5px;color:#e8e8e8">20 µs</div>
<div style="position:absolute;left:531.2px;top:325px;width:295px;height:15px;background:#303030;border:1px solid #3a3a3a;border-radius:2px"></div>
<div style="position:absolute;left:534px;top:329.3px;text-align:left;white-space:nowrap;line-height:1;font-size:7px;color:#e8e8e8">Trigger</div>
<div style="position:absolute;left:559.5px;top:326.2px;width:72.20000000000005px;height:12.0px;background:#151515;border-radius:2.5px"></div>
<div style="position:absolute;left:619px;top:327.2px;width:0.8px;height:10.0px;background:#2a2a2a"></div>
<div style="position:absolute;left:559.5px;top:329.4px;width:59.5px;text-align:center;white-space:nowrap;line-height:1;font-size:7px;color:#f4f4f4;-webkit-text-stroke:0.2px #f4f4f4">A-Current 1</div>
<svg style="position:absolute;left:622.35px;top:330.2px" width="6" height="4"><path d="M0.5 0.5 L5.5 0.5 L3 3.5Z" fill="#e8e8e8"/></svg>
<div style="position:absolute;left:636.5px;top:330px;text-align:left;white-space:nowrap;line-height:1;font-size:6.5px;color:#c8c8c8">Mode:</div>
<div style="position:absolute;left:655.4px;top:326.2px;width:45.0px;height:12.0px;background:#151515;border-radius:2.5px"></div>
<div style="position:absolute;left:688px;top:327.2px;width:0.8px;height:10.0px;background:#2a2a2a"></div>
<div style="position:absolute;left:655.4px;top:329.4px;width:32.60000000000002px;text-align:center;white-space:nowrap;line-height:1;font-size:7px;color:#f4f4f4;-webkit-text-stroke:0.2px #f4f4f4">Triggered</div>
<svg style="position:absolute;left:691.2px;top:330.2px" width="6" height="4"><path d="M0.5 0.5 L5.5 0.5 L3 3.5Z" fill="#e8e8e8"/></svg>
<div style="position:absolute;left:705.5px;top:330px;text-align:left;white-space:nowrap;line-height:1;font-size:6.5px;color:#c8c8c8">Slope:</div>
<div style="position:absolute;left:724px;top:326.2px;width:12.7px;height:12.3px;background:#151515;border-radius:2px"></div>
<svg style="position:absolute;left:724px;top:326px" width="13" height="13"><path d="M2.5 10.5 L6 10.5 L6 3 L10.5 3" stroke="#eee" stroke-width="1" fill="none"/><path d="M3.5 8 L6 5 L8.5 8Z" fill="#fff"/></svg>
<div style="position:absolute;left:742px;top:330px;text-align:left;white-space:nowrap;line-height:1;font-size:6.5px;color:#c8c8c8">Level:</div>
<div style="position:absolute;left:760px;top:326.5px;width:25.5px;height:12px;background:#262626;border-radius:2px"></div>
<div style="position:absolute;left:760px;top:329.6px;width:25.5px;text-align:center;white-space:nowrap;line-height:1;font-size:7.5px;color:#f0f0f0">79 mA</div>
<div style="position:absolute;left:789.7px;top:330px;text-align:left;white-space:nowrap;line-height:1;font-size:6.5px;color:#c8c8c8">Offset:</div>
<div style="position:absolute;left:810.2px;top:326.5px;width:14.2px;height:12px;background:#262626;border-radius:2px"></div>
<div style="position:absolute;left:810.2px;top:329.6px;width:14.2px;text-align:center;white-space:nowrap;line-height:1;font-size:7.5px;color:#f0f0f0">0 s</div>
<div style="position:absolute;left:872.2px;top:18px;width:2.4px;height:324px;background:#505050"></div>
<div style="position:absolute;left:325.5px;top:341.2px;width:549.5px;height:56.8px;background:linear-gradient(#383838,#303030 70%,#2a2a2a);box-shadow:inset 0 1.2px 0 #4c4c4c"></div>
<div style="position:absolute;left:336.7px;top:346.5px;text-align:left;white-space:nowrap;line-height:1;font-size:5.2px;font-weight:bold;color:#eceef0;letter-spacing:0.2px">INSTRUMENTS</div>
<div style="position:absolute;left:405.7px;top:346.5px;text-align:left;white-space:nowrap;line-height:1;font-size:5.2px;font-weight:bold;color:#eceef0;letter-spacing:0.2px">OUTPUTS</div>
<div style="position:absolute;left:330.5px;top:353.5px;width:58.2px;height:38px;background:#1f1f1f;border-radius:4px"></div>
<div style="position:absolute;left:332px;top:356.6px;width:54px;height:16.3px;border:2px solid #f01010;border-radius:4px"></div>
<div style="position:absolute;left:335.6px;top:358.2px;width:12.8px;height:12.7px;background:linear-gradient(#40e0f0,#10b8d0);border-radius:3px"></div>
<div style="position:absolute;left:335.6px;top:360.3px;width:12.8px;text-align:center;white-space:nowrap;line-height:1;font-size:9px;color:#e8ffff">A</div>
<div style="position:absolute;left:350.7px;top:358.5px;width:33.3px;height:12.5px;background:#262626;border-radius:6px;box-shadow:inset 0 0 0 0.6px #3a3a3a"></div>
<div style="position:absolute;left:350.7px;top:362.3px;width:33.3px;text-align:center;white-space:nowrap;line-height:1;font-size:6.5px;color:#f0f0f0">Connected</div>
<div style="position:absolute;left:335.6px;top:376.8px;width:12.8px;height:12.4px;background:linear-gradient(#f0f0f0,#b8b8b8);border-radius:3px"></div>
<div style="position:absolute;left:335.6px;top:378.8px;width:12.8px;text-align:center;white-space:nowrap;line-height:1;font-size:9px;color:#333">B</div>
<div style="position:absolute;left:350.7px;top:377px;width:34px;height:12px;background:#262626;border-radius:6px;box-shadow:inset 0 0 0 0.6px #3a3a3a"></div>
<div style="position:absolute;left:350.7px;top:379.8px;width:34px;text-align:center;white-space:nowrap;line-height:1;font-size:6.5px;color:#f0f0f0">Connect</div>
<div style="position:absolute;left:389.8px;top:355px;width:5.1px;height:36.5px;background:#5a5a5a;border-radius:2px"></div>
<svg style="position:absolute;left:390px;top:369px" width="5" height="8"><path d="M0.8 0.8 L4.2 4 L0.8 7.2Z" fill="#f0f0f0"/></svg>
<div style="position:absolute;left:405.7px;top:357.8px;width:10.100000000000023px;height:30.6px;background:linear-gradient(90deg,#e8b820,#c89010);border-radius:1px"></div>
<div style="position:absolute;left:405.7px;top:377.5px;width:10.100000000000023px;text-align:center;white-space:nowrap;line-height:1;font-size:11px;color:#111;font-weight:bold">1</div>
<div style="position:absolute;left:416.9px;top:357.8px;width:10.2px;height:8.3px;background:#f4f4f4;border-radius:2px"></div>
<div style="position:absolute;left:416.9px;top:359.40000000000003px;width:10.2px;text-align:center;white-space:nowrap;line-height:1;font-size:5.6px;font-weight:bold;color:#333;letter-spacing:-0.3px">V1</div>
<div style="position:absolute;left:416.9px;top:369.6px;width:10.2px;height:8.3px;background:#d8c820;border-radius:2px"></div>
<div style="position:absolute;left:416.9px;top:371.20000000000005px;width:10.2px;text-align:center;white-space:nowrap;line-height:1;font-size:5.6px;font-weight:bold;color:#333;letter-spacing:-0.3px">I1</div>
<div style="position:absolute;left:416.9px;top:381.40000000000003px;width:10.2px;height:8.3px;background:#f4f4f4;border-radius:2px"></div>
<div style="position:absolute;left:416.9px;top:383.00000000000006px;width:10.2px;text-align:center;white-space:nowrap;line-height:1;font-size:5.6px;font-weight:bold;color:#333;letter-spacing:-0.3px">P1</div>
<div style="position:absolute;left:428.7px;top:356.6px;width:40.60000000000002px;height:10.2px;background:#2a2a2a;border:1px solid #7a7a7a;border-radius:2px"></div>
<div style="position:absolute;left:459.2px;top:356.6px;width:10.100000000000023px;height:10.2px;background:#3a3a3a;border:1px solid #7a7a7a;border-radius:0 2px 2px 0"></div>
<div style="position:absolute;left:428.7px;top:359.20000000000005px;width:30.5px;text-align:center;white-space:nowrap;line-height:1;font-size:6.8px;color:#f4f4f4;-webkit-text-stroke:0.2px #f4f4f4">1 V /</div>
<svg style="position:absolute;left:461.75px;top:360.6px" width="5" height="3"><path d="M0 0 L5 0 L2.5 3Z" fill="#e8e8e8"/></svg>
<div style="position:absolute;left:428.7px;top:368.5px;width:40.60000000000002px;height:10.2px;background:#2a2a2a;border:1px solid #7a7a7a;border-radius:2px"></div>
<div style="position:absolute;left:459.2px;top:368.5px;width:10.100000000000023px;height:10.2px;background:#3a3a3a;border:1px solid #7a7a7a;border-radius:0 2px 2px 0"></div>
<div style="position:absolute;left:428.7px;top:371.1px;width:30.5px;text-align:center;white-space:nowrap;line-height:1;font-size:6.8px;color:#f4f4f4;-webkit-text-stroke:0.2px #f4f4f4">100 mA /</div>
<svg style="position:absolute;left:461.75px;top:372.5px" width="5" height="3"><path d="M0 0 L5 0 L2.5 3Z" fill="#e8e8e8"/></svg>
<div style="position:absolute;left:428.7px;top:380.40000000000003px;width:40.60000000000002px;height:10.2px;background:#2a2a2a;border:1px solid #7a7a7a;border-radius:2px"></div>
<div style="position:absolute;left:459.2px;top:380.40000000000003px;width:10.100000000000023px;height:10.2px;background:#3a3a3a;border:1px solid #7a7a7a;border-radius:0 2px 2px 0"></div>
<div style="position:absolute;left:428.7px;top:383.00000000000006px;width:30.5px;text-align:center;white-space:nowrap;line-height:1;font-size:6.8px;color:#f4f4f4;-webkit-text-stroke:0.2px #f4f4f4">50 mW /</div>
<svg style="position:absolute;left:461.75px;top:384.40000000000003px" width="5" height="3"><path d="M0 0 L5 0 L2.5 3Z" fill="#e8e8e8"/></svg>
<div style="position:absolute;left:486.7px;top:357.8px;width:10.0px;height:30.6px;background:linear-gradient(90deg,#48b030,#2c8a20);border-radius:1px"></div>
<div style="position:absolute;left:486.7px;top:377.5px;width:10.0px;text-align:center;white-space:nowrap;line-height:1;font-size:11px;color:#111;font-weight:bold">2</div>
<div style="position:absolute;left:497.9px;top:357.8px;width:10.2px;height:8.3px;background:#30d030;border-radius:2px"></div>
<div style="position:absolute;left:497.9px;top:359.40000000000003px;width:10.2px;text-align:center;white-space:nowrap;line-height:1;font-size:5.6px;font-weight:bold;color:#111;letter-spacing:-0.3px">V2</div>
<div style="position:absolute;left:497.9px;top:369.6px;width:10.2px;height:8.3px;background:#f4f4f4;border-radius:2px"></div>
<div style="position:absolute;left:497.9px;top:371.20000000000005px;width:10.2px;text-align:center;white-space:nowrap;line-height:1;font-size:5.6px;font-weight:bold;color:#333;letter-spacing:-0.3px">I2</div>
<div style="position:absolute;left:497.9px;top:381.40000000000003px;width:10.2px;height:8.3px;background:#f4f4f4;border-radius:2px"></div>
<div style="position:absolute;left:497.9px;top:383.00000000000006px;width:10.2px;text-align:center;white-space:nowrap;line-height:1;font-size:5.6px;font-weight:bold;color:#333;letter-spacing:-0.3px">P2</div>
<div style="position:absolute;left:510px;top:356.6px;width:41px;height:10.2px;background:#2a2a2a;border:1px solid #7a7a7a;border-radius:2px"></div>
<div style="position:absolute;left:540.5px;top:356.6px;width:10.5px;height:10.2px;background:#3a3a3a;border:1px solid #7a7a7a;border-radius:0 2px 2px 0"></div>
<div style="position:absolute;left:510px;top:359.20000000000005px;width:30.5px;text-align:center;white-space:nowrap;line-height:1;font-size:6.8px;color:#f4f4f4;-webkit-text-stroke:0.2px #f4f4f4">1 V /</div>
<svg style="position:absolute;left:543.25px;top:360.6px" width="5" height="3"><path d="M0 0 L5 0 L2.5 3Z" fill="#e8e8e8"/></svg>
<div style="position:absolute;left:510px;top:368.5px;width:41px;height:10.2px;background:#2a2a2a;border:1px solid #7a7a7a;border-radius:2px"></div>
<div style="position:absolute;left:540.5px;top:368.5px;width:10.5px;height:10.2px;background:#3a3a3a;border:1px solid #7a7a7a;border-radius:0 2px 2px 0"></div>
<div style="position:absolute;left:510px;top:371.1px;width:30.5px;text-align:center;white-space:nowrap;line-height:1;font-size:6.8px;color:#f4f4f4;-webkit-text-stroke:0.2px #f4f4f4">10 mA /</div>
<svg style="position:absolute;left:543.25px;top:372.5px" width="5" height="3"><path d="M0 0 L5 0 L2.5 3Z" fill="#e8e8e8"/></svg>
<div style="position:absolute;left:510px;top:380.40000000000003px;width:41px;height:10.2px;background:#2a2a2a;border:1px solid #7a7a7a;border-radius:2px"></div>
<div style="position:absolute;left:540.5px;top:380.40000000000003px;width:10.5px;height:10.2px;background:#3a3a3a;border:1px solid #7a7a7a;border-radius:0 2px 2px 0"></div>
<div style="position:absolute;left:510px;top:383.00000000000006px;width:30.5px;text-align:center;white-space:nowrap;line-height:1;font-size:6.8px;color:#f4f4f4;-webkit-text-stroke:0.2px #f4f4f4">50 mW /</div>
<svg style="position:absolute;left:543.25px;top:384.40000000000003px" width="5" height="3"><path d="M0 0 L5 0 L2.5 3Z" fill="#e8e8e8"/></svg>
<div style="position:absolute;left:568.4px;top:357.8px;width:9.800000000000068px;height:30.6px;background:linear-gradient(90deg,#4a78c8,#3058a8);border-radius:1px"></div>
<div style="position:absolute;left:568.4px;top:377.5px;width:9.800000000000068px;text-align:center;white-space:nowrap;line-height:1;font-size:11px;color:#111;font-weight:bold">3</div>
<svg style="position:absolute;left:568.4px;top:359px" width="10" height="6"><path d="M1 2 Q3 6 5 3 Q7 0 9 3" stroke="#dde" stroke-width="0.8" fill="none"/></svg>
<div style="position:absolute;left:579.8px;top:357.8px;width:10.2px;height:8.3px;background:#3090f0;border-radius:2px"></div>
<div style="position:absolute;left:579.8px;top:359.40000000000003px;width:10.2px;text-align:center;white-space:nowrap;line-height:1;font-size:5.6px;font-weight:bold;color:#111;letter-spacing:-0.3px">V3</div>
<div style="position:absolute;left:579.8px;top:369.6px;width:10.2px;height:8.3px;background:#f4f4f4;border-radius:2px"></div>
<div style="position:absolute;left:579.8px;top:371.20000000000005px;width:10.2px;text-align:center;white-space:nowrap;line-height:1;font-size:5.6px;font-weight:bold;color:#333;letter-spacing:-0.3px">I3</div>
<div style="position:absolute;left:579.8px;top:381.40000000000003px;width:10.2px;height:8.3px;background:#f4f4f4;border-radius:2px"></div>
<div style="position:absolute;left:579.8px;top:383.00000000000006px;width:10.2px;text-align:center;white-space:nowrap;line-height:1;font-size:5.6px;font-weight:bold;color:#333;letter-spacing:-0.3px">P3</div>
<div style="position:absolute;left:591.2px;top:356.6px;width:41.19999999999993px;height:10.2px;background:#2a2a2a;border:1px solid #7a7a7a;border-radius:2px"></div>
<div style="position:absolute;left:622px;top:356.6px;width:10.399999999999977px;height:10.2px;background:#3a3a3a;border:1px solid #7a7a7a;border-radius:0 2px 2px 0"></div>
<div style="position:absolute;left:591.2px;top:359.20000000000005px;width:30.799999999999955px;text-align:center;white-space:nowrap;line-height:1;font-size:6.8px;color:#f4f4f4;-webkit-text-stroke:0.2px #f4f4f4">5 V /</div>
<svg style="position:absolute;left:624.7px;top:360.6px" width="5" height="3"><path d="M0 0 L5 0 L2.5 3Z" fill="#e8e8e8"/></svg>
<div style="position:absolute;left:591.2px;top:368.5px;width:41.19999999999993px;height:10.2px;background:#2a2a2a;border:1px solid #7a7a7a;border-radius:2px"></div>
<div style="position:absolute;left:622px;top:368.5px;width:10.399999999999977px;height:10.2px;background:#3a3a3a;border:1px solid #7a7a7a;border-radius:0 2px 2px 0"></div>
<div style="position:absolute;left:591.2px;top:371.1px;width:30.799999999999955px;text-align:center;white-space:nowrap;line-height:1;font-size:6.8px;color:#f4f4f4;-webkit-text-stroke:0.2px #f4f4f4">50 mA /</div>
<svg style="position:absolute;left:624.7px;top:372.5px" width="5" height="3"><path d="M0 0 L5 0 L2.5 3Z" fill="#e8e8e8"/></svg>
<div style="position:absolute;left:591.2px;top:380.40000000000003px;width:41.19999999999993px;height:10.2px;background:#2a2a2a;border:1px solid #7a7a7a;border-radius:2px"></div>
<div style="position:absolute;left:622px;top:380.40000000000003px;width:10.399999999999977px;height:10.2px;background:#3a3a3a;border:1px solid #7a7a7a;border-radius:0 2px 2px 0"></div>
<div style="position:absolute;left:591.2px;top:383.00000000000006px;width:30.799999999999955px;text-align:center;white-space:nowrap;line-height:1;font-size:6.8px;color:#f4f4f4;-webkit-text-stroke:0.2px #f4f4f4">50 mW /</div>
<svg style="position:absolute;left:624.7px;top:384.40000000000003px" width="5" height="3"><path d="M0 0 L5 0 L2.5 3Z" fill="#e8e8e8"/></svg>
<svg style="position:absolute;left:640px;top:342px" width="90" height="54"><path d="M10 54 L10 11 Q10 9 12 9 L15 9 L19 3.5 Q20.5 2.5 22 2.5 L68 2.5 Q70.5 2.5 70.5 5 L70.5 11 L78 11 Q81 11 81 14 L81 54" fill="#292929" stroke="#444" stroke-width="1"/></svg>
<div style="position:absolute;left:672.7px;top:346.5px;text-align:left;white-space:nowrap;line-height:1;font-size:5.5px;font-weight:bold;color:#f4f6f8;letter-spacing:0.2px">ACTIVE</div>
<div style="position:absolute;left:649.5px;top:357.8px;width:9.5px;height:30.6px;background:linear-gradient(90deg,#d04aa0,#b02880);border-radius:1px"></div>
<div style="position:absolute;left:649.5px;top:377.5px;width:9.5px;text-align:center;white-space:nowrap;line-height:1;font-size:11px;color:#111;font-weight:bold">4</div>
<div style="position:absolute;left:661px;top:357.8px;width:10.2px;height:8.3px;background:#f4f4f4;border-radius:2px"></div>
<div style="position:absolute;left:661px;top:359.40000000000003px;width:10.2px;text-align:center;white-space:nowrap;line-height:1;font-size:5.6px;font-weight:bold;color:#333;letter-spacing:-0.3px">V4</div>
<div style="position:absolute;left:661px;top:369.6px;width:10.2px;height:8.3px;background:#e040e8;border-radius:2px"></div>
<div style="position:absolute;left:661px;top:371.20000000000005px;width:10.2px;text-align:center;white-space:nowrap;line-height:1;font-size:5.6px;font-weight:bold;color:#333;letter-spacing:-0.3px">I4</div>
<div style="position:absolute;left:661px;top:381.40000000000003px;width:10.2px;height:8.3px;background:#f4f4f4;border-radius:2px"></div>
<div style="position:absolute;left:661px;top:383.00000000000006px;width:10.2px;text-align:center;white-space:nowrap;line-height:1;font-size:5.6px;font-weight:bold;color:#333;letter-spacing:-0.3px">P4</div>
<div style="position:absolute;left:672.4px;top:356.6px;width:41.39999999999998px;height:10.2px;background:#2a2a2a;border:1px solid #7a7a7a;border-radius:2px"></div>
<div style="position:absolute;left:703.4px;top:356.6px;width:10.399999999999977px;height:10.2px;background:#3a3a3a;border:1px solid #7a7a7a;border-radius:0 2px 2px 0"></div>
<div style="position:absolute;left:672.4px;top:359.20000000000005px;width:31.0px;text-align:center;white-space:nowrap;line-height:1;font-size:6.8px;color:#f4f4f4;-webkit-text-stroke:0.2px #f4f4f4">1 V /</div>
<svg style="position:absolute;left:706.0999999999999px;top:360.6px" width="5" height="3"><path d="M0 0 L5 0 L2.5 3Z" fill="#e8e8e8"/></svg>
<div style="position:absolute;left:672.4px;top:368.5px;width:41.39999999999998px;height:10.2px;background:#2a2a2a;border:1px solid #7a7a7a;border-radius:2px"></div>
<div style="position:absolute;left:703.4px;top:368.5px;width:10.399999999999977px;height:10.2px;background:#3a3a3a;border:1px solid #7a7a7a;border-radius:0 2px 2px 0"></div>
<div style="position:absolute;left:672.4px;top:371.1px;width:31.0px;text-align:center;white-space:nowrap;line-height:1;font-size:6.8px;color:#f4f4f4;-webkit-text-stroke:0.2px #f4f4f4">5 mA /</div>
<svg style="position:absolute;left:706.0999999999999px;top:372.5px" width="5" height="3"><path d="M0 0 L5 0 L2.5 3Z" fill="#e8e8e8"/></svg>
<div style="position:absolute;left:672.4px;top:380.40000000000003px;width:41.39999999999998px;height:10.2px;background:#2a2a2a;border:1px solid #7a7a7a;border-radius:2px"></div>
<div style="position:absolute;left:703.4px;top:380.40000000000003px;width:10.399999999999977px;height:10.2px;background:#3a3a3a;border:1px solid #7a7a7a;border-radius:0 2px 2px 0"></div>
<div style="position:absolute;left:672.4px;top:383.00000000000006px;width:31.0px;text-align:center;white-space:nowrap;line-height:1;font-size:6.8px;color:#f4f4f4;-webkit-text-stroke:0.2px #f4f4f4">50 mW /</div>
<svg style="position:absolute;left:706.0999999999999px;top:384.40000000000003px" width="5" height="3"><path d="M0 0 L5 0 L2.5 3Z" fill="#e8e8e8"/></svg>
<div style="position:absolute;left:723.9px;top:346.5px;text-align:left;white-space:nowrap;line-height:1;font-size:5.5px;font-weight:bold;color:#f4f6f8;letter-spacing:0.2px">FORMULA</div>
<div style="position:absolute;left:723px;top:353.5px;width:69px;height:38px;background:#292929;border-radius:4px"></div>
<div style="position:absolute;left:726.7px;top:357.8px;width:9.9px;height:8.3px;background:#f4f4f4;border-radius:2px"></div>
<div style="position:absolute;left:726.7px;top:359.6px;width:9.9px;text-align:center;white-space:nowrap;line-height:1;font-size:5px;font-weight:bold;color:#333">F1</div>
<svg style="position:absolute;left:738.5px;top:359.8px" width="5" height="5"><path d="M0 0 L5 0 L2.5 4Z" fill="#8a8a8a"/></svg>
<div style="position:absolute;left:745px;top:356.6px;width:40.8px;height:10.2px;background:#2a2a2a;border:1px solid #7a7a7a;border-radius:2px"></div>
<div style="position:absolute;left:775.3px;top:356.6px;width:10.5px;height:10.2px;background:#3a3a3a;border:1px solid #7a7a7a;border-radius:0 2px 2px 0"></div>
<div style="position:absolute;left:745px;top:359.20000000000005px;width:30.3px;text-align:center;white-space:nowrap;line-height:1;font-size:6.8px;color:#f4f4f4;-webkit-text-stroke:0.2px #f4f4f4">1 V /</div>
<svg style="position:absolute;left:778px;top:360.6px" width="5" height="3"><path d="M0 0 L5 0 L2.5 3Z" fill="#e8e8e8"/></svg>
<div style="position:absolute;left:726.7px;top:369.6px;width:9.9px;height:8.3px;background:#f4f4f4;border-radius:2px"></div>
<div style="position:absolute;left:726.7px;top:371.40000000000003px;width:9.9px;text-align:center;white-space:nowrap;line-height:1;font-size:5px;font-weight:bold;color:#333">F2</div>
<svg style="position:absolute;left:738.5px;top:371.6px" width="5" height="5"><path d="M0 0 L5 0 L2.5 4Z" fill="#8a8a8a"/></svg>
<div style="position:absolute;left:745px;top:368.5px;width:40.8px;height:10.2px;background:#2a2a2a;border:1px solid #7a7a7a;border-radius:2px"></div>
<div style="position:absolute;left:775.3px;top:368.5px;width:10.5px;height:10.2px;background:#3a3a3a;border:1px solid #7a7a7a;border-radius:0 2px 2px 0"></div>
<div style="position:absolute;left:745px;top:371.1px;width:30.3px;text-align:center;white-space:nowrap;line-height:1;font-size:6.8px;color:#f4f4f4;-webkit-text-stroke:0.2px #f4f4f4">1 V /</div>
<svg style="position:absolute;left:778px;top:372.5px" width="5" height="3"><path d="M0 0 L5 0 L2.5 3Z" fill="#e8e8e8"/></svg>
<div style="position:absolute;left:726.7px;top:381.40000000000003px;width:9.9px;height:8.3px;background:#f4f4f4;border-radius:2px"></div>
<div style="position:absolute;left:726.7px;top:383.20000000000005px;width:9.9px;text-align:center;white-space:nowrap;line-height:1;font-size:5px;font-weight:bold;color:#333">F3</div>
<svg style="position:absolute;left:738.5px;top:383.40000000000003px" width="5" height="5"><path d="M0 0 L5 0 L2.5 4Z" fill="#8a8a8a"/></svg>
<div style="position:absolute;left:745px;top:380.40000000000003px;width:40.8px;height:10.2px;background:#2a2a2a;border:1px solid #7a7a7a;border-radius:2px"></div>
<div style="position:absolute;left:775.3px;top:380.40000000000003px;width:10.5px;height:10.2px;background:#3a3a3a;border:1px solid #7a7a7a;border-radius:0 2px 2px 0"></div>
<div style="position:absolute;left:745px;top:383.00000000000006px;width:30.3px;text-align:center;white-space:nowrap;line-height:1;font-size:6.8px;color:#f4f4f4;-webkit-text-stroke:0.2px #f4f4f4">1 V /</div>
<svg style="position:absolute;left:778px;top:384.40000000000003px" width="5" height="3"><path d="M0 0 L5 0 L2.5 3Z" fill="#e8e8e8"/></svg>
<div style="position:absolute;left:794.8px;top:347.3px;text-align:left;white-space:nowrap;line-height:1;font-size:5.5px;font-weight:bold;color:#f4f6f8">RUN</div>
<div style="position:absolute;left:796.4px;top:356.3px;width:71.6px;height:36.3px;background:#2c2c2c;border:1px solid #393939;border-radius:4px"></div>
<div style="position:absolute;left:807px;top:360.2px;width:16px;text-align:center;white-space:nowrap;line-height:1;font-size:5.5px;font-weight:bold;color:#e8e8e8">Scope</div>
<div style="position:absolute;left:841.7px;top:360.2px;width:16px;text-align:center;white-space:nowrap;line-height:1;font-size:5.5px;font-weight:bold;color:#e8e8e8">Arb</div>
<svg style="position:absolute;left:803px;top:367px" width="60" height="24"><circle cx="12" cy="11.6" r="11" fill="url(#rg)" stroke="#1a1a1a" stroke-width="0.8"/><path d="M9 6.5 L16.5 11.6 L9 16.7Z" fill="#5a5a5a"/><circle cx="46.7" cy="11.6" r="11" fill="url(#rg)" stroke="#1a1a1a" stroke-width="0.8"/><rect x="42" y="7" width="9.4" height="9.4" rx="1" fill="#606060" stroke="#444" stroke-width="0.6"/><defs><radialGradient id="rg" cx="50%" cy="35%" r="65%"><stop offset="0" stop-color="#f8f8f8"/><stop offset="0.7" stop-color="#d8d8d8"/><stop offset="1" stop-color="#a8a8a8"/></radialGradient></defs></svg>
</body></html>
